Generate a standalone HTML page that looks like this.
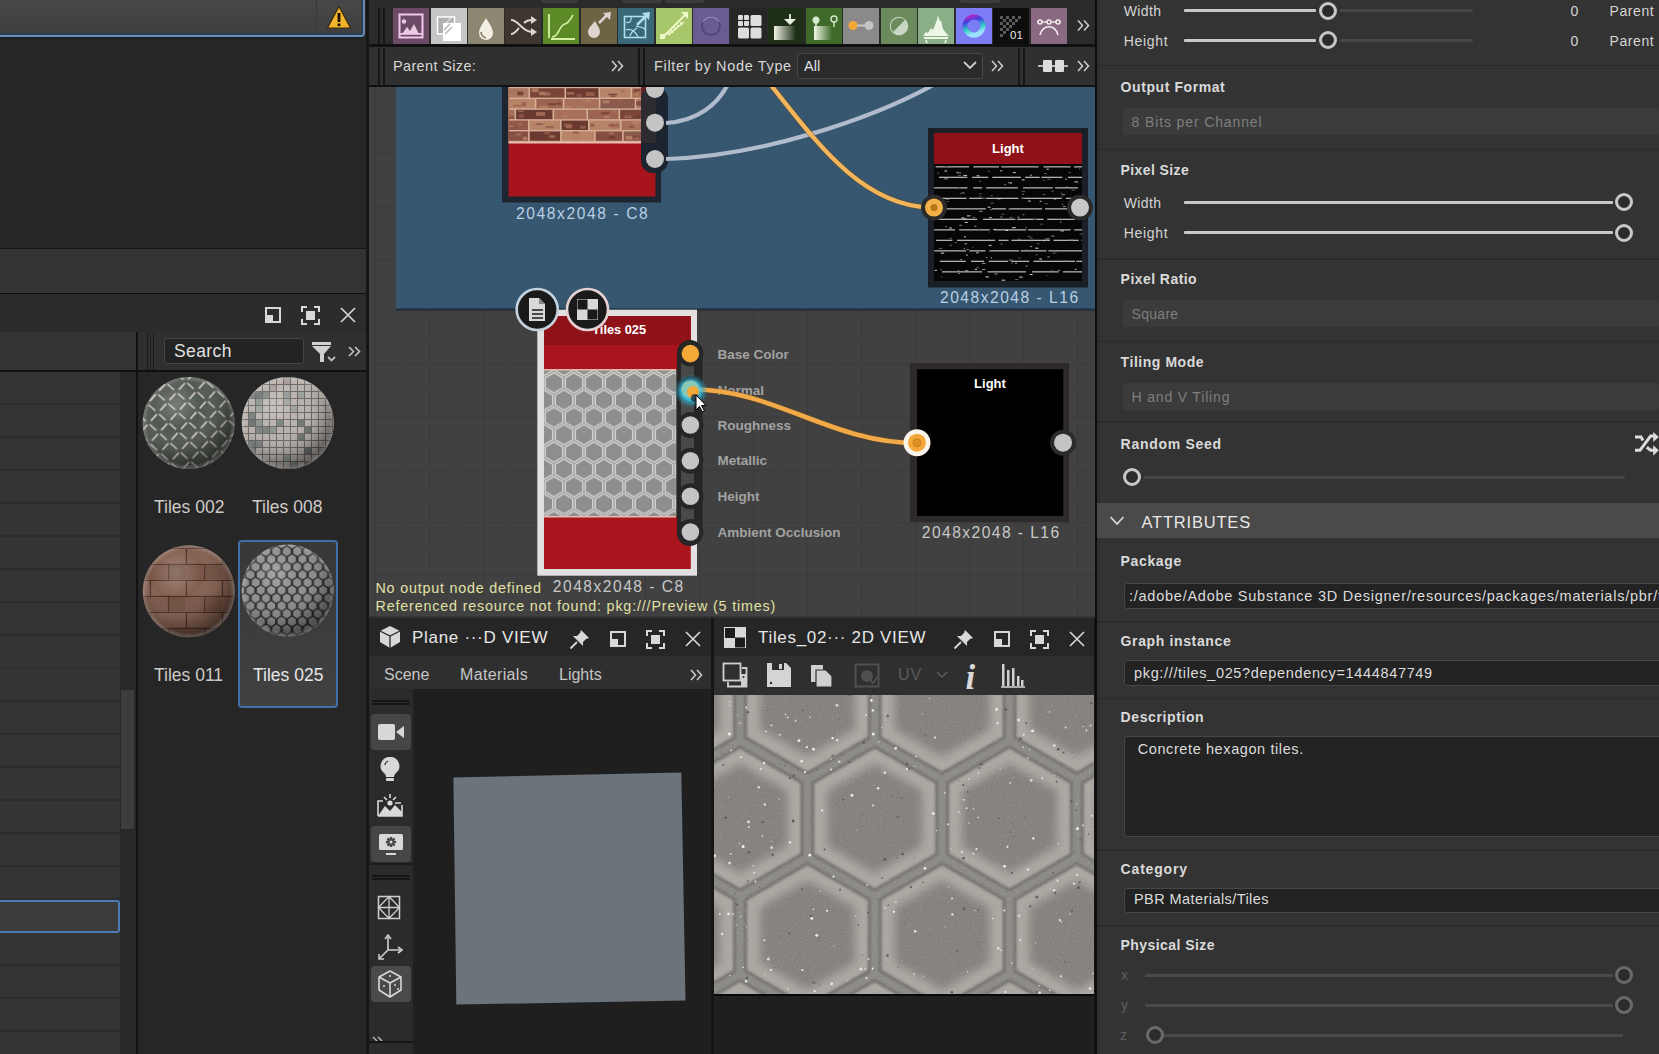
<!DOCTYPE html>
<html><head><meta charset="utf-8">
<style>
*{box-sizing:border-box;margin:0;padding:0}
html,body{width:1659px;height:1054px;overflow:hidden;background:#333;font-family:"Liberation Sans",sans-serif;color:#ccc}
.a{position:absolute}
.t{position:absolute;white-space:nowrap;line-height:1}
svg{position:absolute;overflow:visible}
</style></head><body>


<!-- ============ LEFT PANEL ============ -->
<div class="a" style="left:0;top:0;width:366px;height:1054px;background:#262626"></div>
<div class="a" style="left:0;top:0;width:365px;height:36.5px;background:linear-gradient(#474747,#3f3f3f);border-bottom:2px solid #6f8cb6;border-right:2px solid #6a88ac;border-bottom-right-radius:4px;box-shadow:inset 0 -1.5px 0 #22405e, inset -1.5px 0 0 #22405e, 0 1.5px 0 #16202c"></div>
<div class="a" style="left:316px;top:0;width:1px;height:35px;background:#393939"></div>
<svg style="left:326px;top:5px" width="26" height="25" viewBox="0 0 26 25"><path d="M13 1.5 L24.5 23 L1.5 23 Z" fill="#f2b52a" stroke="#3a2a10" stroke-width="1.2" stroke-linejoin="round"/><rect x="11.6" y="8" width="2.8" height="9" fill="#1a0a05"/><rect x="11.6" y="18.5" width="2.8" height="2.6" fill="#1a0a05"/></svg>
<div class="a" style="left:0;top:248px;width:366px;height:46px;background:#333;border-top:1px solid #141414;border-bottom:1px solid #0e0e0e"></div>
<div class="a" style="left:0;top:294px;width:366px;height:38px;background:#2c2c2c"></div>
<!-- panel header icons -->
<svg style="left:265px;top:307px" width="16" height="16" viewBox="0 0 16 16"><rect x="1" y="1" width="14" height="14" fill="none" stroke="#d8d8d8" stroke-width="2"/><rect x="1" y="8" width="7" height="7" fill="#d8d8d8"/></svg>
<svg style="left:301px;top:306px" width="19" height="19" viewBox="0 0 19 19"><path d="M1 6V1H6M13 1H18V6M18 13V18H13M6 18H1V13" fill="none" stroke="#d8d8d8" stroke-width="2"/><rect x="5" y="5" width="9" height="9" fill="#d8d8d8"/></svg>
<svg style="left:340px;top:307px" width="16" height="16" viewBox="0 0 16 16"><path d="M1 1L15 15M15 1L1 15" stroke="#d8d8d8" stroke-width="1.6"/></svg>
<div class="a" style="left:0;top:332px;width:136px;height:39px;background:#333"></div>
<div class="a" style="left:138px;top:332px;width:228px;height:39px;background:#2f2f2f"></div>
<div class="a" style="left:147px;top:333px;width:1px;height:37px;background:#181818"></div>
<div class="a" style="left:150px;top:333px;width:1px;height:37px;background:#222"></div>
<div class="a" style="left:153px;top:333px;width:1px;height:37px;background:#181818"></div>
<div class="a" style="left:164px;top:338px;width:140px;height:26px;background:#232323;border:1px solid #454545;border-radius:3px"></div>
<div class="t" style="left:174px;top:343px;font-size:17.5px;color:#e0e0e0;letter-spacing:0.4px">Search</div>
<svg style="left:312px;top:342px" width="26" height="22" viewBox="0 0 26 22"><rect x="0" y="0" width="19" height="3" fill="#d0d0d0"/><path d="M0 4H19L12 12V20H8V12Z" fill="#d0d0d0"/><path d="M16 15L19.5 18.5L23 15" fill="none" stroke="#bbb" stroke-width="1.8"/></svg>
<svg style="left:348px;top:346px" width="13" height="11" viewBox="0 0 13 11"><path d="M1 1L5.5 5.5L1 10M7 1L11.5 5.5L7 10" fill="none" stroke="#c8c8c8" stroke-width="1.5"/></svg>
<div class="a" style="left:0;top:370px;width:366px;height:2px;background:#0f0f0f"></div>
<div class="a" style="left:136px;top:332px;width:2px;height:722px;background:#121212"></div>
<!-- list rows -->
<div class="a" style="left:0;top:371.5px;width:120px;height:683px;background:repeating-linear-gradient(#343434 0px,#343434 31.5px,#2c2c2c 31.5px,#2c2c2c 33px)"></div>
<div class="a" style="left:120px;top:372px;width:16px;height:682px;background:#282828"></div>
<div class="a" style="left:121px;top:690px;width:13px;height:139px;background:#3d3d3d"></div>
<div class="a" style="left:0;top:900px;width:120px;height:33px;background:#3c3c3c;border:2px solid #4c7bb3;border-left:none;border-radius:0 3px 3px 0"></div>
<!-- thumbnails -->
<div class="a" style="left:138px;top:372px;width:227px;height:682px;background:#262626"></div>
<div class="a" style="left:238px;top:540px;width:100px;height:168px;background:linear-gradient(#383838,#414141);border:2px solid #3f70a8;border-radius:4px"></div>
<svg style="left:0;top:0" width="366" height="720" viewBox="0 0 366 720">
<defs>
<radialGradient id="shd" cx="0.36" cy="0.3" r="0.78"><stop offset="0" stop-color="#fff" stop-opacity="0.22"/><stop offset="0.35" stop-color="#fff" stop-opacity="0"/><stop offset="0.7" stop-color="#000" stop-opacity="0.18"/><stop offset="0.92" stop-color="#000" stop-opacity="0.5"/><stop offset="1" stop-color="#000" stop-opacity="0.6"/></radialGradient>
<radialGradient id="rim" cx="0.5" cy="0.5" r="0.5"><stop offset="0.9" stop-color="#fff" stop-opacity="0"/><stop offset="1" stop-color="#ddd" stop-opacity="0.25"/></radialGradient>
<pattern id="p002" width="14" height="14" patternUnits="userSpaceOnUse" patternTransform="translate(188 420) rotate(42)"><rect width="14" height="14" fill="#525852"/><path d="M2.5 1H11.5M1 2.5V11.5" stroke="#cfc8c0" stroke-width="1.7"/></pattern>
<pattern id="p008" width="7" height="7" patternUnits="userSpaceOnUse" patternTransform="translate(241 377)"><path d="M0 0.5H7M0.5 0V7" stroke="#6a6866" stroke-width="1"/></pattern>
<pattern id="p011" width="36" height="32" patternUnits="userSpaceOnUse" patternTransform="translate(150 548)"><rect width="36" height="32" fill="#7a5648"/><rect x="1" y="1" width="34" height="14" fill="#84604f"/><rect x="19" y="17" width="16" height="14" fill="#70503f"/><path d="M0 0.5H36M0 16.5H36M0.5 0V16M18.5 16V32" stroke="#4a3028" stroke-width="1.2"/></pattern>
<pattern id="p025" width="10.4" height="15.6" patternUnits="userSpaceOnUse" patternTransform="translate(240 545)"><rect width="10.4" height="15.6" fill="#2e2e2c"/><path d="M5.20 10.90L1.26 8.62L1.26 4.07L5.20 1.80L9.14 4.07L9.14 8.62ZM0.00 18.70L-3.94 16.43L-3.94 11.88L-0.00 9.60L3.94 11.87L3.94 16.43ZM10.40 18.70L6.46 16.43L6.46 11.88L10.40 9.60L14.34 11.87L14.34 16.43ZM0.00 3.10L-3.94 0.82L-3.94 -3.73L-0.00 -6.00L3.94 -3.73L3.94 0.82ZM10.40 3.10L6.46 0.82L6.46 -3.73L10.40 -6.00L14.34 -3.73L14.34 0.82Z" fill="#8e8e8c"/></pattern>
<clipPath id="c008"><circle cx="287.8" cy="423" r="46"/></clipPath>
</defs>
<circle cx="188.7" cy="423" r="46" fill="url(#p002)"/><circle cx="188.7" cy="423" r="46" fill="url(#shd)"/><circle cx="188.7" cy="423" r="46" fill="url(#rim)"/>
<circle cx="287.8" cy="423" r="46" fill="#bab2ac"/><g clip-path="url(#c008)"><rect x="248" y="391" width="7" height="7" fill="#6e7672"/><rect x="248" y="412" width="7" height="7" fill="#7c8480"/><rect x="248" y="419" width="7" height="7" fill="#6e7672"/><rect x="248" y="440" width="7" height="7" fill="#7c8480"/><rect x="248" y="447" width="7" height="7" fill="#7c8480"/><rect x="255" y="391" width="7" height="7" fill="#6e7672"/><rect x="255" y="398" width="7" height="7" fill="#8e9692"/><rect x="255" y="405" width="7" height="7" fill="#9aa09c"/><rect x="255" y="419" width="7" height="7" fill="#8e9692"/><rect x="255" y="426" width="7" height="7" fill="#7c8480"/><rect x="255" y="440" width="7" height="7" fill="#7c8480"/><rect x="262" y="391" width="7" height="7" fill="#7c8480"/><rect x="262" y="426" width="7" height="7" fill="#7c8480"/><rect x="269" y="384" width="7" height="7" fill="#a89c96"/><rect x="269" y="426" width="7" height="7" fill="#8e9692"/><rect x="276" y="419" width="7" height="7" fill="#7c8480"/><rect x="283" y="377" width="7" height="7" fill="#a89c96"/><rect x="283" y="391" width="7" height="7" fill="#8e9692"/><rect x="283" y="398" width="7" height="7" fill="#9aa09c"/><rect x="283" y="454" width="7" height="7" fill="#8e9692"/><rect x="290" y="405" width="7" height="7" fill="#9aa09c"/><rect x="290" y="461" width="7" height="7" fill="#8e9692"/><rect x="297" y="391" width="7" height="7" fill="#9aa09c"/><rect x="297" y="419" width="7" height="7" fill="#6e7672"/><rect x="297" y="433" width="7" height="7" fill="#6e7672"/><rect x="304" y="426" width="7" height="7" fill="#6e7672"/><rect x="304" y="447" width="7" height="7" fill="#6e7672"/><rect x="304" y="461" width="7" height="7" fill="#6e7672"/><rect x="318" y="447" width="7" height="7" fill="#9aa09c"/></g><circle cx="287.8" cy="423" r="46" fill="url(#p008)"/><circle cx="287.8" cy="423" r="46" fill="url(#shd)"/><circle cx="287.8" cy="423" r="46" fill="url(#rim)"/>
<circle cx="188.8" cy="591.3" r="46" fill="url(#p011)"/><circle cx="188.8" cy="591.3" r="46" fill="url(#shd)"/><circle cx="188.8" cy="591.3" r="46" fill="url(#rim)"/>
<circle cx="287.7" cy="590.4" r="46" fill="url(#p025)"/><circle cx="287.7" cy="590.4" r="46" fill="url(#shd)"/><circle cx="287.7" cy="590.4" r="46" fill="url(#rim)"/>
</svg>
<div class="t" style="left:154px;top:499px;font-size:17.5px;color:#cfcac6">Tiles 002</div>
<div class="t" style="left:252px;top:499px;font-size:17.5px;color:#cfcac6">Tiles 008</div>
<div class="t" style="left:154px;top:667px;font-size:17.5px;color:#cfcac6">Tiles 011</div>
<div class="t" style="left:253px;top:667px;font-size:17.5px;color:#e6e6e6">Tiles 025</div>


<!-- ============ MIDDLE ============ -->
<div class="a" style="left:366px;top:0;width:3px;height:1054px;background:#161616"></div>
<div class="a" style="left:369px;top:0;width:727px;height:45px;background:#2b2b2b"></div>
<div class="a" style="left:541px;top:0;width:37px;height:3px;background:#3c3c3c;border-radius:0 0 3px 3px"></div>
<div class="a" style="left:622px;top:0;width:40px;height:3px;background:#3c3c3c;border-radius:0 0 3px 3px"></div>
<div class="a" style="left:665px;top:0;width:40px;height:3px;background:#3c3c3c;border-radius:0 0 3px 3px"></div>
<div class="a" style="left:960px;top:0;width:40px;height:3px;background:#3c3c3c;border-radius:0 0 3px 3px"></div>
<div class="a" style="left:378px;top:8px;width:2px;height:37px;background:#161616"></div>
<div class="a" style="left:383px;top:8px;width:2px;height:37px;background:#161616"></div>
<svg style="left:393px;top:8px" width="36" height="36" viewBox="0 0 36 36"><rect width="36" height="36" fill="#6a4a64"/><rect x="6.5" y="6.5" width="23" height="23" fill="none" stroke="#f2c8ee" stroke-width="2"/><circle cx="11" cy="13.5" r="2.2" fill="#e8c8e4"/><path d="M9 26L14 19L17 23L21 16L26 26Z" fill="#e8cce4"/><rect x="7" y="25" width="22" height="1.8" fill="#f2c8ee"/></svg>
<svg style="left:431px;top:8px" width="36" height="36" viewBox="0 0 36 36"><rect width="36" height="36" fill="#c6c6c6"/><rect x="6.5" y="9" width="17" height="17" fill="#b0b0b0" stroke="#fff" stroke-width="1.5"/><path d="M14 16L20 10M14 21L21 14" stroke="#ddd" stroke-width="1.5"/><rect x="12" y="15" width="18" height="18" fill="#fff"/><path d="M13 22L19 16M14 26L21 19" stroke="#b8b8b8" stroke-width="1.6"/></svg>
<svg style="left:468px;top:8px" width="36" height="36" viewBox="0 0 36 36"><rect width="36" height="36" fill="#8c8770"/><path d="M18 10C21 15 25 20 25 25A7 7 0 0 1 11 25C11 20 15 15 18 10Z" fill="#f2eee2"/><path d="M13 24C13 28 15 29 18 30" fill="none" stroke="#7a7560" stroke-width="1.5"/></svg>
<svg style="left:505px;top:8px" width="36" height="36" viewBox="0 0 36 36"><rect width="36" height="36" fill="#3c3530"/><path d="M6 12C14 12 17 24 27 24M6 26C10 26 12 22 14 20M19 15C21 13 23 12 27 12" fill="none" stroke="#ddd5cc" stroke-width="2"/><path d="M26 8L32 12L26 16Z M26 20L32 24L26 28Z" fill="#ddd5cc"/></svg>
<svg style="left:543px;top:8px" width="36" height="36" viewBox="0 0 36 36"><rect width="36" height="36" fill="#5c8a26"/><path d="M6 6V30M8 31H32" stroke="#d6f0a8" stroke-width="1.8"/><path d="M9 29C16 29 16 17 22 16C26 15 28 10 30 7" fill="none" stroke="#d6f0a8" stroke-width="1.6"/></svg>
<svg style="left:581px;top:8px" width="36" height="36" viewBox="0 0 36 36"><rect width="36" height="36" fill="#6c6445"/><path d="M14 13C16 17 19 20 19 24A6 6 0 0 1 7 24C7 20 11 17 14 13Z" fill="#ddd4d0"/><path d="M18 15L27 6" stroke="#ddd4d0" stroke-width="2.5"/><path d="M22 5L30 4L29 12Z" fill="#ddd4d0"/></svg>
<svg style="left:618px;top:8px" width="36" height="36" viewBox="0 0 36 36"><rect width="36" height="36" fill="#3a6878"/><rect x="6.5" y="8.5" width="21" height="21" fill="none" stroke="#aee0f0" stroke-width="1.6"/><path d="M8 14C12 16 14 12 13 9M8 22C13 20 18 24 20 29M18 18C22 20 26 18 27 22M12 28C13 24 16 22 19 20" fill="none" stroke="#aee0f0" stroke-width="1.2"/><path d="M19 17L29 7" stroke="#aee0f0" stroke-width="2.5"/><path d="M24 5L32 4L31 12Z" fill="#aee0f0"/></svg>
<svg style="left:656px;top:8px" width="36" height="36" viewBox="0 0 36 36"><rect width="36" height="36" fill="#a8c66a"/><path d="M6 30L30 6" stroke="#eef8c8" stroke-width="1.8"/><rect x="4" y="26" width="5" height="5" fill="#eef8c8"/><path d="M25 4L32 4L32 11Z" fill="#eef8c8"/><path d="M12 27L28 14M14 27L12 24M17 25L15 22M20 22L18 19M23 19L21 17M26 17L24 14" stroke="#eef8c8" stroke-width="1.6"/></svg>
<svg style="left:693px;top:8px" width="36" height="36" viewBox="0 0 36 36"><rect width="36" height="36" fill="#6a5c90"/><circle cx="18" cy="18" r="9" fill="none" stroke="#52457a" stroke-width="1.8"/><path d="M10 14A9 9 0 0 1 26 14" fill="none" stroke="#9a8cc8" stroke-width="1.2"/></svg>
<svg style="left:731px;top:8px" width="36" height="36" viewBox="0 0 36 36"><rect width="36" height="36" fill="#262626"/><rect x="7" y="7" width="5" height="5" rx="1" fill="#ddd"/><rect x="13" y="7" width="5" height="5" rx="1" fill="#ddd"/><rect x="7" y="13" width="5" height="5" rx="1" fill="#ddd"/><rect x="13" y="13" width="5" height="5" rx="1" fill="#ddd"/><rect x="19.5" y="7" width="11" height="11" rx="1.5" fill="#ddd"/><rect x="7" y="19.5" width="11" height="11" rx="1.5" fill="#ddd"/><rect x="19.5" y="19.5" width="11" height="11" rx="1.5" fill="#ddd"/></svg>
<svg style="left:768px;top:8px" width="36" height="36" viewBox="0 0 36 36"><rect width="36" height="36" fill="#1f2e17"/><defs><linearGradient id="gr11" x1="0" x2="1"><stop offset="0" stop-color="#f0f4e8"/><stop offset="1" stop-color="#1f2e17"/></linearGradient></defs><rect x="6" y="18" width="22" height="14" fill="url(#gr11)"/><path d="M22 6V14" stroke="#e8eee0" stroke-width="1.8"/><path d="M16 11H28L22 17Z" fill="#e8eee0"/></svg>
<svg style="left:806px;top:8px" width="36" height="36" viewBox="0 0 36 36"><rect width="36" height="36" fill="#3f6a2a"/><defs><linearGradient id="gr12" x1="0" x2="1"><stop offset="0" stop-color="#f0f8e8"/><stop offset="1" stop-color="#3f6a2a"/></linearGradient></defs><path d="M8 18H26V32H8Z" fill="url(#gr12)"/><circle cx="10" cy="12" r="3.5" fill="#d8e8d0"/><path d="M8 14L10 19L12 14" fill="#d8e8d0"/><circle cx="28" cy="11" r="3" fill="none" stroke="#d8e8d0" stroke-width="1.4"/><path d="M28 14V19" stroke="#d8e8d0" stroke-width="1.4"/></svg>
<svg style="left:843px;top:8px" width="36" height="36" viewBox="0 0 36 36"><rect width="36" height="36" fill="#8a8a8a"/><circle cx="10" cy="17.5" r="4.5" fill="#f4a838"/><circle cx="26" cy="17.5" r="4.5" fill="#c4c4c4"/><rect x="14" y="16.5" width="8" height="2" fill="#c8c8c8"/></svg>
<svg style="left:881px;top:8px" width="36" height="36" viewBox="0 0 36 36"><rect width="36" height="36" fill="#6b8b5c"/><circle cx="18" cy="18" r="8.5" fill="#c8d8c4" stroke="#c8d8c4" stroke-width="1.5"/><path d="M12 24L24 12A8.5 8.5 0 0 0 12 24Z" fill="#6b8b5c"/></svg>
<svg style="left:918px;top:8px" width="36" height="36" viewBox="0 0 36 36"><rect width="36" height="36" fill="#8aae88"/><path d="M5 28L8 24L10 25L13 20L15 22L17 17L19 12L20 7L22 14L23 12L25 21L28 25L31 28Z" fill="#eef6e6"/><rect x="6" y="29" width="24" height="2" fill="#eef6e6"/><path d="M8 32L9 35M28 32L27 35" stroke="#eef6e6" stroke-width="1.5"/></svg>
<svg style="left:956px;top:8px" width="36" height="36" viewBox="0 0 36 36"><rect width="36" height="36" fill="#7c7cf4"/><defs><linearGradient id="gr16" x1="0" y1="0" x2="0.3" y2="1"><stop offset="0" stop-color="#c020c0"/><stop offset="0.3" stop-color="#4040e0"/><stop offset="0.7" stop-color="#30d0c0"/><stop offset="1" stop-color="#a0e0ff"/></linearGradient></defs><circle cx="18" cy="18" r="9" fill="none" stroke="url(#gr16)" stroke-width="5"/></svg>
<svg style="left:993px;top:8px" width="36" height="36" viewBox="0 0 36 36"><rect width="36" height="36" fill="#0d0d0d"/><path d="M7 8h3v3h-3zM13 8h3v3h-3zM19 8h3v3h-3zM25 8h3v3h-3zM10 11h3v3h-3zM16 11h3v3h-3zM22 11h3v3h-3zM7 14h3v3h-3zM13 14h3v3h-3zM19 14h3v3h-3zM10 17h3v3h-3zM16 17h3v3h-3zM7 20h3v3h-3zM13 20h3v3h-3zM10 23h3v3h-3zM7 26h3v3h-3z" fill="#5a5a5a"/><text x="17" y="31" font-family="Liberation Sans" font-size="11.5" fill="#e8e8e8">01</text></svg>
<svg style="left:1031px;top:8px" width="36" height="36" viewBox="0 0 36 36"><rect width="36" height="36" fill="#8a6a82"/><path d="M9 27C12 16 24 16 27 27" fill="none" stroke="#f4eef0" stroke-width="1.6"/><path d="M6 14H30" stroke="#f4eef0" stroke-width="1.4"/><circle cx="9" cy="14" r="2" fill="#8a6a82" stroke="#f4eef0" stroke-width="1.4"/><circle cx="18" cy="14" r="2" fill="#8a6a82" stroke="#f4eef0" stroke-width="1.4"/><circle cx="27" cy="14" r="2" fill="#8a6a82" stroke="#f4eef0" stroke-width="1.4"/></svg>
<svg style="left:1077px;top:19px" width="13" height="13" viewBox="0 0 13 13"><path d="M1 1.5L5.5 6.5L1 11.5M7 1.5L11.5 6.5L7 11.5" fill="none" stroke="#cfcfcf" stroke-width="1.5"/></svg>
<div class="a" style="left:369px;top:44px;width:727px;height:3px;background:#111"></div>
<div class="a" style="left:369px;top:47px;width:727px;height:38px;background:#303030"></div>
<div class="a" style="left:378px;top:48px;width:2px;height:37px;background:#161616"></div>
<div class="a" style="left:383px;top:48px;width:2px;height:37px;background:#161616"></div>
<div class="t" style="left:393px;top:59px;font-size:14.5px;color:#d6d6d6;letter-spacing:0.35px">Parent Size:</div>
<svg style="left:611px;top:60px" width="13" height="12" viewBox="0 0 13 12"><path d="M1 1L5.5 6L1 11M7 1L11.5 6L7 11" fill="none" stroke="#cfcfcf" stroke-width="1.5"/></svg>
<div class="a" style="left:638px;top:48px;width:2px;height:37px;background:#161616"></div>
<div class="a" style="left:643px;top:48px;width:2px;height:37px;background:#161616"></div>
<div class="t" style="left:654px;top:59px;font-size:14.5px;color:#d6d6d6;letter-spacing:0.65px">Filter by Node Type</div>
<div class="a" style="left:797px;top:53px;width:186px;height:26px;background:#2a2a2a;border:1px solid #474747;border-radius:3px"></div>
<div class="t" style="left:804px;top:59px;font-size:14.5px;color:#e0e0e0">All</div>
<svg style="left:963px;top:61px" width="14" height="9" viewBox="0 0 14 9"><path d="M1 1L7 7L13 1" fill="none" stroke="#cfcfcf" stroke-width="1.8"/></svg>
<svg style="left:991px;top:60px" width="13" height="12" viewBox="0 0 13 12"><path d="M1 1L5.5 6L1 11M7 1L11.5 6L7 11" fill="none" stroke="#cfcfcf" stroke-width="1.5"/></svg>
<div class="a" style="left:1018px;top:48px;width:2px;height:37px;background:#161616"></div>
<div class="a" style="left:1023px;top:48px;width:2px;height:37px;background:#161616"></div>
<svg style="left:1038px;top:58px" width="30" height="16" viewBox="0 0 30 16"><path d="M0 8H30" stroke="#ddd" stroke-width="1.6"/><rect x="5" y="2" width="9" height="12" rx="1" fill="#ddd"/><rect x="17" y="2" width="9" height="12" rx="1" fill="#ddd"/></svg>
<svg style="left:1077px;top:60px" width="13" height="12" viewBox="0 0 13 12"><path d="M1 1L5.5 6L1 11M7 1L11.5 6L7 11" fill="none" stroke="#cfcfcf" stroke-width="1.5"/></svg>
<div class="a" style="left:369px;top:85px;width:727px;height:2px;background:#111"></div>

<svg style="left:369px;top:87px;overflow:hidden" width="727" height="529" viewBox="369 87 727 529">
<defs>
<pattern id="gridc" width="54" height="52.7" patternUnits="userSpaceOnUse" patternTransform="translate(429 364)"><rect width="54" height="52.7" fill="#414141"/><path d="M0 0.5H54M0.5 0V52.7" stroke="#3b3b3b" stroke-width="1.5"/><path d="M0 26.5H54M27 0V52.7" stroke="#3f3f3f" stroke-width="1"/></pattern>
<pattern id="gridb" width="54" height="52.7" patternUnits="userSpaceOnUse" patternTransform="translate(429 364)"><rect width="54" height="52.7" fill="#37566f"/><path d="M0 0.5H54M0.5 0V52.7" stroke="#34526b" stroke-width="1.2"/></pattern>
<pattern id="hexs" width="20" height="34.6" patternUnits="userSpaceOnUse" patternTransform="translate(544 372)"><rect width="20" height="34.6" fill="#a6a6a4"/>
<g fill="#8e8e8c" stroke="#cfcfcd" stroke-width="1.3">
<path d="M10 0.8L18.6 5.8V15.8L10 20.8L1.4 15.8V5.8Z"/>
<path d="M10 35.4L18.6 40.4V50.4L10 55.4L1.4 50.4V40.4Z"/>
<path d="M0 18.1L8.6 23.1V33.1L0 38.1L-8.6 33.1V23.1Z"/><path d="M20 18.1L28.6 23.1V33.1L20 38.1L11.4 33.1V23.1Z"/>
<path d="M0 -16.5L8.6 -11.5V-1.5L0 3.5L-8.6 -1.5V-11.5Z"/><path d="M20 -16.5L28.6 -11.5V-1.5L20 3.5L11.4 -1.5V-11.5Z"/>
</g></pattern>
</defs>
<rect x="369" y="87" width="727" height="529" fill="url(#gridc)"/>
<rect x="396" y="87" width="699" height="222" fill="url(#gridb)"/>
<rect x="396" y="308.5" width="699" height="2" fill="#1e2c3a"/>

<!-- top brick node -->
<rect x="502" y="87" width="159" height="115.5" fill="#1d2530"/>
<rect x="508.5" y="87" width="147" height="109.5" fill="#a8141c"/>
<rect x="508.5" y="87" width="132.5" height="56" fill="#d4ae96"/><rect x="508.5" y="88.2" width="20.0" height="9.4" fill="#ac7862"/><rect x="511.2" y="92.9" width="5.7" height="3.6" fill="#ac7862" opacity="0.8"/><rect x="509.7" y="90.0" width="6.8" height="3.5" fill="#a8705a" opacity="0.8"/><rect x="517.2" y="91.6" width="6.2" height="3.7" fill="#6a3a30" opacity="0.8"/><rect x="530.1" y="88.2" width="34.4" height="9.4" fill="#7a4438"/><rect x="531.8" y="88.4" width="6.7" height="3.6" fill="#b88468" opacity="0.8"/><rect x="539.1" y="91.8" width="6.6" height="3.4" fill="#b88468" opacity="0.8"/><rect x="544.2" y="92.4" width="6.1" height="3.1" fill="#ac7862" opacity="0.8"/><rect x="566.1" y="88.2" width="32.4" height="9.4" fill="#6a3a30"/><rect x="585.7" y="92.1" width="9.0" height="4.0" fill="#9c6450" opacity="0.8"/><rect x="566.8" y="92.0" width="7.5" height="2.8" fill="#a8705a" opacity="0.8"/><rect x="576.5" y="93.8" width="5.4" height="3.6" fill="#94584a" opacity="0.8"/><rect x="600.1" y="88.2" width="30.4" height="9.4" fill="#b88468"/><rect x="608.3" y="93.7" width="8.6" height="1.6" fill="#6a3a30" opacity="0.8"/><rect x="621.1" y="89.9" width="3.4" height="3.1" fill="#a8705a" opacity="0.8"/><rect x="610.5" y="95.5" width="4.9" height="1.5" fill="#7a4438" opacity="0.8"/><rect x="632.1" y="88.2" width="8.9" height="9.4" fill="#a8705a"/><rect x="634.9" y="92.8" width="3.1" height="2.7" fill="#b88468" opacity="0.8"/><rect x="634.4" y="89.2" width="5.7" height="2.0" fill="#6a3a30" opacity="0.8"/><rect x="633.2" y="90.1" width="3.7" height="2.6" fill="#864e42" opacity="0.8"/><rect x="508.5" y="99.0" width="26.3" height="9.4" fill="#b88468"/><rect x="521.9" y="102.2" width="4.1" height="4.0" fill="#94584a" opacity="0.8"/><rect x="513.0" y="104.7" width="8.9" height="2.0" fill="#9c6450" opacity="0.8"/><rect x="509.9" y="100.5" width="8.0" height="2.5" fill="#b88468" opacity="0.8"/><rect x="536.4" y="99.0" width="26.4" height="9.4" fill="#9c6450"/><rect x="556.7" y="102.3" width="5.2" height="2.6" fill="#7a4438" opacity="0.8"/><rect x="539.2" y="105.8" width="8.2" height="2.0" fill="#b88468" opacity="0.8"/><rect x="548.4" y="103.2" width="7.4" height="1.9" fill="#6a3a30" opacity="0.8"/><rect x="564.4" y="99.0" width="34.4" height="9.4" fill="#a8705a"/><rect x="565.6" y="106.4" width="5.5" height="1.8" fill="#b88468" opacity="0.8"/><rect x="575.8" y="105.3" width="7.4" height="2.5" fill="#ac7862" opacity="0.8"/><rect x="585.8" y="99.6" width="4.8" height="1.9" fill="#b88468" opacity="0.8"/><rect x="600.4" y="99.0" width="34.4" height="9.4" fill="#8a5a4c"/><rect x="602.5" y="100.4" width="6.9" height="3.0" fill="#b88468" opacity="0.8"/><rect x="611.5" y="101.0" width="7.5" height="1.7" fill="#94584a" opacity="0.8"/><rect x="617.8" y="100.0" width="4.1" height="2.4" fill="#9c6450" opacity="0.8"/><rect x="636.4" y="99.0" width="4.6" height="9.4" fill="#ac7862"/><rect x="636.4" y="102.7" width="4.6" height="3.1" fill="#7a4438" opacity="0.8"/><rect x="636.4" y="101.0" width="4.6" height="3.8" fill="#864e42" opacity="0.8"/><rect x="636.4" y="102.8" width="4.6" height="1.6" fill="#864e42" opacity="0.8"/><rect x="508.5" y="109.8" width="6.0" height="9.4" fill="#a8705a"/><rect x="508.5" y="116.4" width="5.7" height="2.4" fill="#7a4438" opacity="0.8"/><rect x="508.5" y="113.7" width="6.0" height="3.8" fill="#a8705a" opacity="0.8"/><rect x="508.5" y="115.8" width="6.0" height="2.5" fill="#94584a" opacity="0.8"/><rect x="516.1" y="109.8" width="36.4" height="9.4" fill="#6a3a30"/><rect x="518.3" y="110.6" width="5.3" height="1.5" fill="#a8705a" opacity="0.8"/><rect x="536.0" y="112.1" width="9.0" height="3.7" fill="#ac7862" opacity="0.8"/><rect x="518.6" y="114.2" width="5.6" height="3.6" fill="#94584a" opacity="0.8"/><rect x="554.1" y="109.8" width="32.4" height="9.4" fill="#a8705a"/><rect x="572.6" y="113.5" width="5.9" height="2.1" fill="#ac7862" opacity="0.8"/><rect x="562.5" y="115.2" width="4.5" height="1.5" fill="#b88468" opacity="0.8"/><rect x="563.1" y="115.4" width="6.1" height="3.4" fill="#ac7862" opacity="0.8"/><rect x="588.1" y="109.8" width="30.4" height="9.4" fill="#9c6450"/><rect x="603.9" y="115.7" width="5.4" height="2.1" fill="#b88468" opacity="0.8"/><rect x="601.0" y="112.0" width="8.3" height="2.5" fill="#7a4438" opacity="0.8"/><rect x="611.9" y="110.1" width="3.8" height="2.4" fill="#a8705a" opacity="0.8"/><rect x="620.1" y="109.8" width="20.9" height="9.4" fill="#7a4438"/><rect x="636.0" y="115.4" width="3.7" height="2.7" fill="#6a3a30" opacity="0.8"/><rect x="624.5" y="115.4" width="6.8" height="2.7" fill="#ac7862" opacity="0.8"/><rect x="624.5" y="113.4" width="4.9" height="3.6" fill="#864e42" opacity="0.8"/><rect x="508.5" y="120.6" width="19.5" height="9.4" fill="#94584a"/><rect x="510.9" y="125.9" width="6.8" height="2.5" fill="#864e42" opacity="0.8"/><rect x="509.2" y="125.4" width="4.4" height="1.9" fill="#ac7862" opacity="0.8"/><rect x="518.7" y="123.1" width="3.7" height="2.8" fill="#a8705a" opacity="0.8"/><rect x="529.6" y="120.6" width="30.4" height="9.4" fill="#b88468"/><rect x="545.7" y="126.1" width="7.9" height="2.1" fill="#8a5a4c" opacity="0.8"/><rect x="535.9" y="123.2" width="7.3" height="1.9" fill="#8a5a4c" opacity="0.8"/><rect x="533.5" y="125.2" width="6.0" height="4.0" fill="#b88468" opacity="0.8"/><rect x="561.6" y="120.6" width="26.4" height="9.4" fill="#6a3a30"/><rect x="563.9" y="123.4" width="8.6" height="3.3" fill="#94584a" opacity="0.8"/><rect x="580.2" y="125.8" width="5.3" height="2.9" fill="#9c6450" opacity="0.8"/><rect x="565.8" y="125.2" width="5.8" height="3.1" fill="#a8705a" opacity="0.8"/><rect x="589.6" y="120.6" width="30.4" height="9.4" fill="#b88468"/><rect x="611.1" y="123.6" width="8.4" height="4.0" fill="#9c6450" opacity="0.8"/><rect x="590.0" y="123.7" width="4.6" height="3.3" fill="#94584a" opacity="0.8"/><rect x="608.6" y="123.8" width="5.6" height="2.9" fill="#94584a" opacity="0.8"/><rect x="621.6" y="120.6" width="19.4" height="9.4" fill="#a8705a"/><rect x="629.0" y="126.0" width="5.6" height="1.6" fill="#7a4438" opacity="0.8"/><rect x="633.8" y="123.4" width="5.8" height="4.0" fill="#ac7862" opacity="0.8"/><rect x="631.8" y="121.2" width="8.7" height="2.7" fill="#b88468" opacity="0.8"/><rect x="508.5" y="131.4" width="19.6" height="9.4" fill="#864e42"/><rect x="510.4" y="134.8" width="8.0" height="2.9" fill="#8a5a4c" opacity="0.8"/><rect x="522.9" y="136.9" width="4.5" height="3.2" fill="#b88468" opacity="0.8"/><rect x="516.5" y="133.5" width="4.8" height="1.9" fill="#ac7862" opacity="0.8"/><rect x="529.7" y="131.4" width="30.4" height="9.4" fill="#6a3a30"/><rect x="544.3" y="131.6" width="6.2" height="2.8" fill="#94584a" opacity="0.8"/><rect x="549.2" y="135.3" width="6.1" height="2.5" fill="#ac7862" opacity="0.8"/><rect x="554.7" y="134.9" width="3.6" height="1.9" fill="#6a3a30" opacity="0.8"/><rect x="561.7" y="131.4" width="32.4" height="9.4" fill="#b88468"/><rect x="573.2" y="137.6" width="5.8" height="1.8" fill="#ac7862" opacity="0.8"/><rect x="572.7" y="131.7" width="6.1" height="1.8" fill="#864e42" opacity="0.8"/><rect x="562.3" y="132.6" width="3.8" height="3.4" fill="#b88468" opacity="0.8"/><rect x="595.7" y="131.4" width="26.4" height="9.4" fill="#864e42"/><rect x="609.0" y="132.2" width="4.9" height="2.4" fill="#a8705a" opacity="0.8"/><rect x="608.8" y="135.9" width="8.1" height="3.1" fill="#6a3a30" opacity="0.8"/><rect x="614.9" y="135.3" width="3.1" height="3.1" fill="#8a5a4c" opacity="0.8"/><rect x="623.7" y="131.4" width="17.3" height="9.4" fill="#8a5a4c"/><rect x="632.6" y="135.5" width="6.8" height="2.8" fill="#7a4438" opacity="0.8"/><rect x="634.2" y="136.9" width="4.4" height="3.4" fill="#9c6450" opacity="0.8"/><rect x="625.8" y="135.9" width="6.6" height="3.7" fill="#b88468" opacity="0.8"/><rect x="508.5" y="142" width="132.5" height="1.5" fill="#e8bcae"/><rect x="641" y="87" width="27" height="86" rx="12" fill="#1c2430"/>
<rect x="641" y="87" width="15" height="56" fill="#3a3230" opacity="0.6"/>
<circle cx="655" cy="89" r="9" fill="#c4c4c4"/>
<circle cx="655" cy="122.7" r="9" fill="#c4c4c4"/>
<circle cx="655" cy="159" r="9" fill="#c4c4c4"/>
<text x="516" y="218.7" font-family="Liberation Sans" font-size="15.6" fill="#b8d0e6" letter-spacing="1.6">2048x2048 - C8</text>

<!-- wires -->
<path d="M666 123C698 121 718 104 728 84" fill="none" stroke="#b0bccb" stroke-width="4.2"/>
<path d="M666 159C760 156 870 120 935 84" fill="none" stroke="#b0bccb" stroke-width="4.2"/>
<path d="M770 84C815 140 860 205 930 207.5" fill="none" stroke="#6a4a20" stroke-width="6" opacity="0.5"/>
<path d="M770 84C815 140 860 205 930 207.5" fill="none" stroke="#f2b55a" stroke-width="4.3"/>

<!-- light node 1 -->
<rect x="928" y="128" width="160" height="159.5" fill="#1b2028"/>
<rect x="934" y="133" width="148" height="31" fill="#8e1218"/>
<rect x="934" y="164" width="148" height="117" fill="#060606"/><rect x="935.6" y="166.2" width="33.5" height="1.3" fill="#b0b0b0"/><rect x="973.3" y="166.2" width="25.7" height="1.3" fill="#b0b0b0"/><rect x="1001.2" y="166.2" width="37.3" height="1.3" fill="#b0b0b0"/><rect x="1043.5" y="166.2" width="27.0" height="1.3" fill="#b0b0b0"/><rect x="1074.0" y="166.2" width="8.0" height="1.3" fill="#b0b0b0"/><rect x="988.2" y="170.8" width="1.2" height="1" fill="#8a8a8a"/><rect x="1068.5" y="172.1" width="2.3" height="1" fill="#5a5a5a"/><rect x="1046.5" y="168.7" width="2.3" height="1" fill="#cccccc"/><rect x="1012.9" y="172.1" width="2.9" height="1" fill="#cccccc"/><rect x="937.4" y="172.7" width="1.3" height="1" fill="#8a8a8a"/><rect x="1000.2" y="170.4" width="2.0" height="1" fill="#cccccc"/><rect x="956.1" y="171.8" width="2.4" height="1" fill="#8a8a8a"/><rect x="944.9" y="166.2" width="3.0" height="1" fill="#5a5a5a"/><rect x="1044.2" y="173.0" width="2.7" height="1" fill="#5a5a5a"/><rect x="944.4" y="170.5" width="2.7" height="1" fill="#cccccc"/><rect x="963.4" y="174.9" width="3.7" height="1" fill="#cccccc"/><rect x="976.6" y="175.3" width="2.5" height="1" fill="#cccccc"/><rect x="1079.2" y="168.4" width="1.1" height="1" fill="#8a8a8a"/><rect x="957.2" y="172.4" width="3.9" height="1" fill="#8a8a8a"/><rect x="938.9" y="176.7" width="28.4" height="1.3" fill="#b0b0b0"/><rect x="972.0" y="176.7" width="16.2" height="1.3" fill="#b0b0b0"/><rect x="992.3" y="176.7" width="28.6" height="1.3" fill="#b0b0b0"/><rect x="1025.0" y="176.7" width="14.7" height="1.3" fill="#b0b0b0"/><rect x="1041.5" y="176.7" width="20.9" height="1.3" fill="#b0b0b0"/><rect x="1068.0" y="176.7" width="14.0" height="1.3" fill="#b0b0b0"/><rect x="978.8" y="175.5" width="1.2" height="1" fill="#8a8a8a"/><rect x="1047.4" y="178.8" width="3.1" height="1" fill="#5a5a5a"/><rect x="1009.9" y="182.2" width="1.7" height="1" fill="#8a8a8a"/><rect x="1074.4" y="181.4" width="3.6" height="1" fill="#cccccc"/><rect x="1007.9" y="182.3" width="3.8" height="1" fill="#8a8a8a"/><rect x="957.7" y="175.1" width="3.4" height="1" fill="#5a5a5a"/><rect x="1004.5" y="184.3" width="1.2" height="1" fill="#cccccc"/><rect x="1030.1" y="174.7" width="1.7" height="1" fill="#cccccc"/><rect x="944.1" y="178.4" width="3.7" height="1" fill="#8a8a8a"/><rect x="1042.9" y="180.0" width="1.8" height="1" fill="#5a5a5a"/><rect x="1010.7" y="183.0" width="1.1" height="1" fill="#8a8a8a"/><rect x="1065.3" y="178.7" width="1.5" height="1" fill="#cccccc"/><rect x="1021.8" y="179.4" width="2.7" height="1" fill="#cccccc"/><rect x="979.0" y="180.7" width="1.8" height="1" fill="#5a5a5a"/><rect x="934.1" y="187.2" width="33.4" height="1.3" fill="#b0b0b0"/><rect x="973.2" y="187.2" width="8.9" height="1.3" fill="#b0b0b0"/><rect x="986.1" y="187.2" width="31.8" height="1.3" fill="#b0b0b0"/><rect x="1023.1" y="187.2" width="29.6" height="1.3" fill="#b0b0b0"/><rect x="1055.1" y="187.2" width="23.0" height="1.3" fill="#b0b0b0"/><rect x="1066.2" y="186.4" width="1.3" height="1" fill="#8a8a8a"/><rect x="961.3" y="192.5" width="3.4" height="1" fill="#8a8a8a"/><rect x="1060.6" y="192.7" width="1.4" height="1" fill="#5a5a5a"/><rect x="1071.5" y="189.6" width="3.7" height="1" fill="#5a5a5a"/><rect x="958.2" y="187.0" width="2.1" height="1" fill="#5a5a5a"/><rect x="1042.7" y="193.9" width="2.8" height="1" fill="#5a5a5a"/><rect x="1061.6" y="194.1" width="3.4" height="1" fill="#8a8a8a"/><rect x="990.6" y="195.2" width="2.2" height="1" fill="#5a5a5a"/><rect x="959.6" y="193.3" width="1.8" height="1" fill="#5a5a5a"/><rect x="1022.4" y="193.7" width="1.7" height="1" fill="#8a8a8a"/><rect x="979.2" y="195.6" width="1.9" height="1" fill="#5a5a5a"/><rect x="1051.2" y="190.7" width="2.7" height="1" fill="#5a5a5a"/><rect x="1021.8" y="190.9" width="3.2" height="1" fill="#5a5a5a"/><rect x="979.3" y="193.2" width="2.6" height="1" fill="#5a5a5a"/><rect x="935.9" y="197.7" width="30.8" height="1.3" fill="#b0b0b0"/><rect x="969.3" y="197.7" width="15.4" height="1.3" fill="#b0b0b0"/><rect x="986.1" y="197.7" width="32.3" height="1.3" fill="#b0b0b0"/><rect x="1021.6" y="197.7" width="40.1" height="1.3" fill="#b0b0b0"/><rect x="1065.9" y="197.7" width="16.1" height="1.3" fill="#b0b0b0"/><rect x="1076.7" y="201.4" width="3.8" height="1" fill="#5a5a5a"/><rect x="1028.1" y="200.6" width="2.6" height="1" fill="#cccccc"/><rect x="1061.8" y="196.1" width="1.1" height="1" fill="#5a5a5a"/><rect x="997.4" y="198.3" width="3.1" height="1" fill="#cccccc"/><rect x="1039.7" y="200.8" width="1.7" height="1" fill="#cccccc"/><rect x="981.8" y="198.0" width="3.7" height="1" fill="#5a5a5a"/><rect x="946.5" y="201.1" width="2.5" height="1" fill="#5a5a5a"/><rect x="1022.3" y="197.9" width="2.3" height="1" fill="#5a5a5a"/><rect x="1044.7" y="203.3" width="3.6" height="1" fill="#5a5a5a"/><rect x="1053.8" y="198.4" width="2.4" height="1" fill="#cccccc"/><rect x="990.3" y="202.7" width="3.5" height="1" fill="#5a5a5a"/><rect x="1078.4" y="195.4" width="1.9" height="1" fill="#cccccc"/><rect x="1061.8" y="203.9" width="1.3" height="1" fill="#8a8a8a"/><rect x="945.6" y="198.9" width="3.8" height="1" fill="#5a5a5a"/><rect x="941.4" y="208.2" width="44.4" height="1.3" fill="#b0b0b0"/><rect x="991.8" y="208.2" width="14.2" height="1.3" fill="#b0b0b0"/><rect x="1009.1" y="208.2" width="33.1" height="1.3" fill="#b0b0b0"/><rect x="1045.1" y="208.2" width="29.5" height="1.3" fill="#b0b0b0"/><rect x="1076.5" y="208.2" width="5.5" height="1.3" fill="#b0b0b0"/><rect x="1009.1" y="217.1" width="3.9" height="1" fill="#5a5a5a"/><rect x="1008.0" y="208.7" width="3.1" height="1" fill="#5a5a5a"/><rect x="989.3" y="217.1" width="2.4" height="1" fill="#cccccc"/><rect x="1001.3" y="213.8" width="3.0" height="1" fill="#5a5a5a"/><rect x="990.2" y="209.1" width="1.6" height="1" fill="#8a8a8a"/><rect x="939.0" y="215.5" width="3.8" height="1" fill="#5a5a5a"/><rect x="987.7" y="206.7" width="2.7" height="1" fill="#cccccc"/><rect x="1022.7" y="214.2" width="1.7" height="1" fill="#8a8a8a"/><rect x="1071.5" y="207.6" width="3.9" height="1" fill="#8a8a8a"/><rect x="1000.3" y="216.5" width="2.1" height="1" fill="#8a8a8a"/><rect x="1017.3" y="216.7" width="2.3" height="1" fill="#8a8a8a"/><rect x="979.1" y="210.8" width="3.6" height="1" fill="#8a8a8a"/><rect x="966.9" y="215.4" width="3.5" height="1" fill="#cccccc"/><rect x="1063.0" y="206.0" width="2.7" height="1" fill="#8a8a8a"/><rect x="938.4" y="218.7" width="38.8" height="1.3" fill="#b0b0b0"/><rect x="983.1" y="218.7" width="32.3" height="1.3" fill="#b0b0b0"/><rect x="1017.2" y="218.7" width="26.4" height="1.3" fill="#b0b0b0"/><rect x="1047.3" y="218.7" width="27.8" height="1.3" fill="#b0b0b0"/><rect x="1078.5" y="218.7" width="3.5" height="1.3" fill="#b0b0b0"/><rect x="956.3" y="218.1" width="1.9" height="1" fill="#5a5a5a"/><rect x="1025.6" y="227.0" width="1.2" height="1" fill="#8a8a8a"/><rect x="961.2" y="217.5" width="3.5" height="1" fill="#cccccc"/><rect x="973.4" y="217.0" width="1.1" height="1" fill="#cccccc"/><rect x="974.2" y="225.8" width="2.2" height="1" fill="#8a8a8a"/><rect x="949.2" y="227.5" width="2.6" height="1" fill="#cccccc"/><rect x="963.0" y="218.6" width="3.9" height="1" fill="#cccccc"/><rect x="945.4" y="226.2" width="1.6" height="1" fill="#8a8a8a"/><rect x="1040.2" y="223.6" width="2.9" height="1" fill="#5a5a5a"/><rect x="959.4" y="224.8" width="2.5" height="1" fill="#8a8a8a"/><rect x="1060.2" y="221.6" width="1.1" height="1" fill="#cccccc"/><rect x="1033.2" y="218.9" width="3.3" height="1" fill="#5a5a5a"/><rect x="1011.9" y="227.2" width="3.9" height="1" fill="#cccccc"/><rect x="964.7" y="221.9" width="3.1" height="1" fill="#cccccc"/><rect x="934.1" y="229.2" width="21.0" height="1.3" fill="#b0b0b0"/><rect x="959.2" y="229.2" width="30.5" height="1.3" fill="#b0b0b0"/><rect x="994.4" y="229.2" width="31.9" height="1.3" fill="#b0b0b0"/><rect x="1028.2" y="229.2" width="42.4" height="1.3" fill="#b0b0b0"/><rect x="1074.3" y="229.2" width="7.7" height="1.3" fill="#b0b0b0"/><rect x="1079.7" y="233.5" width="3.3" height="1" fill="#5a5a5a"/><rect x="1046.0" y="238.3" width="3.7" height="1" fill="#8a8a8a"/><rect x="993.2" y="228.9" width="2.6" height="1" fill="#cccccc"/><rect x="1017.6" y="238.7" width="3.7" height="1" fill="#5a5a5a"/><rect x="1044.3" y="238.6" width="3.2" height="1" fill="#5a5a5a"/><rect x="949.6" y="237.9" width="2.6" height="1" fill="#5a5a5a"/><rect x="977.2" y="228.7" width="3.0" height="1" fill="#5a5a5a"/><rect x="1027.6" y="236.1" width="3.3" height="1" fill="#5a5a5a"/><rect x="965.0" y="229.0" width="3.5" height="1" fill="#8a8a8a"/><rect x="1005.5" y="230.0" width="2.6" height="1" fill="#cccccc"/><rect x="964.0" y="236.3" width="2.0" height="1" fill="#cccccc"/><rect x="1051.2" y="235.6" width="3.2" height="1" fill="#8a8a8a"/><rect x="989.0" y="231.5" width="1.0" height="1" fill="#5a5a5a"/><rect x="1060.5" y="230.4" width="3.5" height="1" fill="#cccccc"/><rect x="936.0" y="239.7" width="16.4" height="1.3" fill="#b0b0b0"/><rect x="957.0" y="239.7" width="38.1" height="1.3" fill="#b0b0b0"/><rect x="998.5" y="239.7" width="10.0" height="1.3" fill="#b0b0b0"/><rect x="1011.4" y="239.7" width="38.6" height="1.3" fill="#b0b0b0"/><rect x="1053.5" y="239.7" width="25.1" height="1.3" fill="#b0b0b0"/><rect x="1081.5" y="239.7" width="0.5" height="1.3" fill="#b0b0b0"/><rect x="1035.2" y="247.7" width="3.3" height="1" fill="#cccccc"/><rect x="1029.8" y="246.1" width="2.4" height="1" fill="#8a8a8a"/><rect x="1069.5" y="239.7" width="3.5" height="1" fill="#8a8a8a"/><rect x="1042.9" y="240.3" width="1.4" height="1" fill="#cccccc"/><rect x="949.2" y="244.7" width="2.9" height="1" fill="#5a5a5a"/><rect x="964.2" y="243.3" width="3.1" height="1" fill="#8a8a8a"/><rect x="938.7" y="248.1" width="3.8" height="1" fill="#5a5a5a"/><rect x="987.8" y="239.6" width="1.4" height="1" fill="#8a8a8a"/><rect x="972.3" y="247.2" width="1.2" height="1" fill="#5a5a5a"/><rect x="1029.6" y="237.6" width="3.2" height="1" fill="#5a5a5a"/><rect x="1036.8" y="243.2" width="2.6" height="1" fill="#5a5a5a"/><rect x="988.6" y="244.9" width="2.9" height="1" fill="#cccccc"/><rect x="954.8" y="242.1" width="2.3" height="1" fill="#5a5a5a"/><rect x="1000.7" y="243.5" width="1.7" height="1" fill="#8a8a8a"/><rect x="934.2" y="250.2" width="31.8" height="1.3" fill="#b0b0b0"/><rect x="969.3" y="250.2" width="16.2" height="1.3" fill="#b0b0b0"/><rect x="989.4" y="250.2" width="29.6" height="1.3" fill="#b0b0b0"/><rect x="1020.4" y="250.2" width="26.1" height="1.3" fill="#b0b0b0"/><rect x="1048.4" y="250.2" width="33.6" height="1.3" fill="#b0b0b0"/><rect x="981.9" y="250.4" width="1.1" height="1" fill="#8a8a8a"/><rect x="963.5" y="247.9" width="1.5" height="1" fill="#8a8a8a"/><rect x="966.3" y="249.1" width="2.6" height="1" fill="#8a8a8a"/><rect x="1025.8" y="249.3" width="1.4" height="1" fill="#5a5a5a"/><rect x="1036.1" y="254.3" width="1.3" height="1" fill="#8a8a8a"/><rect x="966.1" y="254.6" width="1.7" height="1" fill="#cccccc"/><rect x="1018.2" y="257.6" width="2.6" height="1" fill="#5a5a5a"/><rect x="1052.6" y="252.6" width="3.9" height="1" fill="#5a5a5a"/><rect x="986.2" y="257.2" width="1.1" height="1" fill="#cccccc"/><rect x="940.8" y="252.6" width="3.4" height="1" fill="#cccccc"/><rect x="960.6" y="258.9" width="1.2" height="1" fill="#cccccc"/><rect x="1047.3" y="256.4" width="2.6" height="1" fill="#8a8a8a"/><rect x="976.2" y="252.3" width="2.5" height="1" fill="#cccccc"/><rect x="990.8" y="257.4" width="1.2" height="1" fill="#cccccc"/><rect x="939.8" y="260.7" width="26.0" height="1.3" fill="#b0b0b0"/><rect x="971.0" y="260.7" width="13.1" height="1.3" fill="#b0b0b0"/><rect x="988.7" y="260.7" width="19.5" height="1.3" fill="#b0b0b0"/><rect x="1011.2" y="260.7" width="18.0" height="1.3" fill="#b0b0b0"/><rect x="1033.5" y="260.7" width="41.5" height="1.3" fill="#b0b0b0"/><rect x="1076.3" y="260.7" width="5.7" height="1.3" fill="#b0b0b0"/><rect x="1008.8" y="259.6" width="3.9" height="1" fill="#8a8a8a"/><rect x="1015.2" y="262.7" width="1.6" height="1" fill="#cccccc"/><rect x="1025.4" y="265.6" width="2.3" height="1" fill="#8a8a8a"/><rect x="996.1" y="260.7" width="1.1" height="1" fill="#8a8a8a"/><rect x="958.1" y="269.9" width="1.0" height="1" fill="#8a8a8a"/><rect x="1058.1" y="269.9" width="1.7" height="1" fill="#cccccc"/><rect x="1011.2" y="262.8" width="1.8" height="1" fill="#5a5a5a"/><rect x="1065.3" y="260.5" width="2.1" height="1" fill="#8a8a8a"/><rect x="982.0" y="269.0" width="3.5" height="1" fill="#8a8a8a"/><rect x="976.0" y="267.3" width="3.1" height="1" fill="#5a5a5a"/><rect x="1074.8" y="268.8" width="1.7" height="1" fill="#cccccc"/><rect x="981.8" y="262.9" width="3.9" height="1" fill="#8a8a8a"/><rect x="1039.3" y="258.6" width="2.7" height="1" fill="#cccccc"/><rect x="964.9" y="270.1" width="3.3" height="1" fill="#8a8a8a"/><rect x="941.9" y="271.2" width="40.3" height="1.3" fill="#b0b0b0"/><rect x="987.6" y="271.2" width="38.5" height="1.3" fill="#b0b0b0"/><rect x="1032.0" y="271.2" width="26.5" height="1.3" fill="#b0b0b0"/><rect x="1063.0" y="271.2" width="19.0" height="1.3" fill="#b0b0b0"/><rect x="1029.6" y="274.0" width="3.0" height="1" fill="#cccccc"/><rect x="1046.4" y="275.0" width="1.1" height="1" fill="#5a5a5a"/><rect x="934.6" y="269.9" width="2.4" height="1" fill="#cccccc"/><rect x="941.1" y="276.4" width="1.3" height="1" fill="#5a5a5a"/><rect x="1019.1" y="276.6" width="3.6" height="1" fill="#cccccc"/><rect x="994.4" y="273.5" width="3.2" height="1" fill="#8a8a8a"/><rect x="974.8" y="268.9" width="2.2" height="1" fill="#cccccc"/><rect x="1001.6" y="279.7" width="3.6" height="1" fill="#cccccc"/><rect x="1057.5" y="270.4" width="2.0" height="1" fill="#5a5a5a"/><rect x="985.4" y="276.4" width="3.5" height="1" fill="#cccccc"/><rect x="1050.0" y="270.7" width="3.9" height="1" fill="#8a8a8a"/><rect x="958.4" y="273.0" width="1.6" height="1" fill="#8a8a8a"/><rect x="940.2" y="269.1" width="2.0" height="1" fill="#5a5a5a"/><rect x="1014.9" y="279.0" width="3.5" height="1" fill="#5a5a5a"/><text x="1008" y="152.8" text-anchor="middle" font-family="Liberation Sans" font-weight="bold" font-size="13" fill="#fff">Light</text>
<circle cx="934" cy="207.6" r="13" fill="#2a2a2a"/><circle cx="934" cy="207.6" r="9" fill="#f4b048"/><circle cx="934" cy="207.6" r="3.6" fill="#b87818"/>
<circle cx="1080" cy="207.6" r="13" fill="#2a2a2a"/><circle cx="1080" cy="207.6" r="9" fill="#c8c8c8"/>
<text x="940" y="303.2" font-family="Liberation Sans" font-size="15.6" fill="#b8d0e6" letter-spacing="1.5">2048x2048 - L16</text>

<!-- tiles 025 node -->
<rect x="537.3" y="309.7" width="159.7" height="266" fill="#e2e0e0"/>
<rect x="544" y="316" width="146.8" height="253" fill="#aa141c"/>
<rect x="544" y="316" width="146.8" height="29" fill="#8e1218"/>
<rect x="544" y="370" width="132" height="146" fill="url(#hexs)"/>
<rect x="544" y="369" width="132" height="1.5" fill="#e8b8b0"/>
<rect x="544" y="516" width="132" height="1.5" fill="#e8b8b0"/>
<rect x="676" y="370" width="14.8" height="146" fill="#555"/>
<rect x="677" y="340" width="25.5" height="206" rx="12.7" fill="#262626"/>
<rect x="681" y="352" width="13" height="170" fill="#555" opacity="0.75"/>
<text x="619.2" y="334.4" text-anchor="middle" font-family="Liberation Sans" font-weight="bold" font-size="12.8" fill="#fff">Tiles 025</text>
<circle cx="537.2" cy="309.5" r="20.5" fill="#1a1a1a" stroke="#c4d2de" stroke-width="2.6"/>
<circle cx="587.5" cy="309.5" r="20.5" fill="#1a1a1a" stroke="#e6d2d2" stroke-width="2.6"/>
<path d="M529 298H539L545 304V321H529Z" fill="#d8d8d8"/><path d="M539 298V304H545" fill="#888" /><path d="M532 310H543M532 314H543M532 318H543" stroke="#1a1a1a" stroke-width="1.6"/><path d="M531 310h0.1M531 314h0.1" stroke="#1a1a1a"/>
<rect x="577" y="299" width="21" height="21" fill="#d8d8d8"/><rect x="577.5" y="299.5" width="10" height="10" fill="#1a1a1a"/><rect x="587.5" y="309.5" width="10" height="10" fill="#1a1a1a"/>
<circle cx="690.4" cy="353.6" r="13" fill="#262626"/><circle cx="690.4" cy="353.6" r="8.8" fill="#f4a838"/>
<circle cx="690.4" cy="389.3" r="13" fill="#262626"/>
<circle cx="690.4" cy="425" r="13" fill="#262626"/><circle cx="690.4" cy="425" r="8.8" fill="#c4c4c4"/>
<circle cx="690.4" cy="460.7" r="13" fill="#262626"/><circle cx="690.4" cy="460.7" r="8.8" fill="#c4c4c4"/>
<circle cx="690.4" cy="496.3" r="13" fill="#262626"/><circle cx="690.4" cy="496.3" r="8.8" fill="#c4c4c4"/>
<circle cx="690.4" cy="532" r="13" fill="#262626"/><circle cx="690.4" cy="532" r="8.8" fill="#c4c4c4"/>
<text x="552.8" y="591.8" font-family="Liberation Sans" font-size="15.6" fill="#c8c8c8" letter-spacing="1.5">2048x2048 - C8</text>
<g font-family="Liberation Sans" font-weight="bold" font-size="13.5" fill="#a2a2a2" letter-spacing="0">
<text x="717.5" y="359">Base Color</text>
<text x="717.5" y="394.5">Normal</text>
<text x="717.5" y="429.8">Roughness</text>
<text x="717.5" y="465.2">Metallic</text>
<text x="717.5" y="500.7">Height</text>
<text x="717.5" y="536.6">Ambient Occlusion</text>
</g>

<!-- light node 2 -->
<rect x="910" y="363" width="159" height="159" fill="#2e2a2b"/>
<rect x="917" y="369.3" width="146.3" height="146.7" fill="#000"/>
<text x="990" y="387.9" text-anchor="middle" font-family="Liberation Sans" font-weight="bold" font-size="13" fill="#fff">Light</text>
<path d="M692 389.5C775 389 830 443 917 443" fill="none" stroke="#6a4a20" stroke-width="6.5" opacity="0.45"/>
<path d="M692 389.5C775 389 830 443 917 443" fill="none" stroke="#f2aa48" stroke-width="4.6"/>
<circle cx="917" cy="442.7" r="13.5" fill="#fbf4ea"/><circle cx="917" cy="442.7" r="9" fill="#f4a838"/><circle cx="917" cy="442.7" r="4" fill="#e09020" stroke="#c88020" stroke-width="1"/>
<circle cx="1063" cy="442.7" r="13" fill="#2c2c2c"/><circle cx="1063" cy="442.7" r="9" fill="#c4c4c4"/>
<text x="921.8" y="538.3" font-family="Liberation Sans" font-size="15.6" fill="#c8c8c8" letter-spacing="1.45">2048x2048 - L16</text>

<!-- normal pin glow -->
<defs><radialGradient id="glow"><stop offset="0.55" stop-color="#40c8e8" stop-opacity="0.9"/><stop offset="1" stop-color="#2080a0" stop-opacity="0"/></radialGradient></defs>
<circle cx="691" cy="391" r="17" fill="url(#glow)"/>
<circle cx="690.4" cy="389.3" r="8.8" fill="#8ac8b8"/>
<circle cx="693" cy="392" r="6" fill="#f4a838"/>
<circle cx="695" cy="398" r="4" fill="#1a3040" opacity="0.8"/>
<path d="M696 395L696 410L699.5 406.5L702.5 412L704.5 411L701.5 405.5L706 405.5Z" fill="#fff" stroke="#000" stroke-width="1"/>

<!-- status -->
<g font-family="Liberation Sans" font-size="14.3" fill="#e2e2a6">
<text x="375.5" y="592.6" letter-spacing="0.8">No output node defined</text>
<text x="375.5" y="610.5" letter-spacing="0.84">Referenced resource not found: pkg:///Preview (5 times)</text>
</g>
</svg>

<!-- bottom panels -->

<div class="a" style="left:369px;top:618px;width:342px;height:38px;background:#262626"></div>
<div class="a" style="left:369px;top:656px;width:342px;height:33px;background:#2f2f2f"></div>
<div class="a" style="left:369px;top:689px;width:44px;height:365px;background:#2b2b2b"></div>
<div class="a" style="left:413px;top:689px;width:298px;height:365px;background:#1f1f1f"></div>
<svg style="left:378px;top:625px" width="24" height="24" viewBox="0 0 24 24"><path d="M12 1L22 6V17L12 23L2 17V6Z" fill="#d8d8d8"/><path d="M2 6L12 11L22 6M12 11V23" fill="none" stroke="#262626" stroke-width="1.3"/></svg>
<div class="t" style="left:412px;top:629px;font-size:17px;color:#e6e6e6;letter-spacing:0.7px">Plane ···D VIEW</div>
<svg style="left:569px;top:628px" width="22" height="22" viewBox="0 0 22 22"><path d="M12 2L20 10L17 11L14 14L14 18L4 8L8 8L11 5Z" fill="#d8d8d8"/><path d="M8 14L1.5 20.5" stroke="#d8d8d8" stroke-width="1.8"/></svg>
<svg style="left:610px;top:631px" width="16" height="16" viewBox="0 0 16 16"><rect x="1" y="1" width="14" height="14" fill="none" stroke="#d8d8d8" stroke-width="2"/><rect x="1" y="8" width="7" height="7" fill="#d8d8d8"/></svg>
<svg style="left:646px;top:630px" width="19" height="19" viewBox="0 0 19 19"><path d="M1 6V1H6M13 1H18V6M18 13V18H13M6 18H1V13" fill="none" stroke="#d8d8d8" stroke-width="2"/><rect x="5" y="5" width="9" height="9" fill="#d8d8d8"/></svg>
<svg style="left:685px;top:631px" width="16" height="16" viewBox="0 0 16 16"><path d="M1 1L15 15M15 1L1 15" stroke="#d8d8d8" stroke-width="1.6"/></svg>
<div class="t" style="left:384px;top:666.5px;font-size:16px;color:#c6c6c6">Scene</div>
<div class="t" style="left:460px;top:666.5px;font-size:16px;color:#c6c6c6;letter-spacing:0.35px">Materials</div>
<div class="t" style="left:559px;top:666.5px;font-size:16px;color:#c6c6c6">Lights</div>
<svg style="left:690px;top:669px" width="14" height="12" viewBox="0 0 14 12"><path d="M1 1L5.5 6L1 11M7 1L11.5 6L7 11" fill="none" stroke="#cfcfcf" stroke-width="1.5"/></svg>
<!-- 3d toolbar -->
<div class="a" style="left:372px;top:700px;width:38px;height:1.5px;background:#151515"></div>
<div class="a" style="left:372px;top:703px;width:38px;height:1.5px;background:#151515"></div>
<div class="a" style="left:371px;top:714px;width:40px;height:36px;background:#464646;border-radius:4px"></div>
<svg style="left:376px;top:722px" width="30" height="20" viewBox="0 0 30 20"><rect x="2" y="2" width="17" height="16" rx="2" fill="#d8d8d8"/><path d="M20 10L28 4V16Z" fill="#d8d8d8"/></svg>
<svg style="left:378px;top:756px" width="24" height="28" viewBox="0 0 24 28"><path d="M12 1A9 9 0 0 0 6 17C7 18 8 19 8 21H16C16 19 17 18 18 17A9 9 0 0 0 12 1Z" fill="#d8d8d8"/><rect x="8" y="22" width="8" height="3" rx="1" fill="#d8d8d8"/><path d="M7 9A5 5 0 0 1 10 5" stroke="#2b2b2b" stroke-width="1.2" fill="none"/></svg>
<svg style="left:376px;top:792px" width="28" height="27" viewBox="0 0 28 27"><path d="M2 24V9H7M2 24H26V13" fill="none" stroke="#d8d8d8" stroke-width="1.6"/><path d="M2 24L9 14L14 19L19 13L26 20V24Z" fill="#d8d8d8"/><circle cx="14" cy="11" r="2.6" fill="#d8d8d8"/><path d="M14 2V6M8 5L11 8M20 5L17 8M19 11H25" stroke="#d8d8d8" stroke-width="1.6"/></svg>
<div class="a" style="left:371px;top:826px;width:40px;height:36px;background:#464646;border-radius:4px"></div>
<svg style="left:377px;top:833px" width="28" height="24" viewBox="0 0 28 24"><rect x="2" y="1" width="24" height="16" rx="1.5" fill="#d8d8d8"/><path d="M19.07 7.87L19.07 10.13L17.63 10.12L17.36 10.77L18.39 11.79L16.79 13.39L15.77 12.36L15.12 12.63L15.13 14.07L12.87 14.07L12.88 12.63L12.23 12.36L11.21 13.39L9.61 11.79L10.64 10.77L10.37 10.12L8.93 10.13L8.93 7.87L10.37 7.88L10.64 7.23L9.61 6.21L11.21 4.61L12.23 5.64L12.88 5.37L12.87 3.93L15.13 3.93L15.12 5.37L15.77 5.64L16.79 4.61L18.39 6.21L17.36 7.23L17.63 7.88Z" fill="#464646"/><circle cx="14" cy="9" r="1.5" fill="#d8d8d8"/><rect x="9" y="20" width="10" height="2" fill="#d8d8d8"/></svg>
<div class="a" style="left:369px;top:863px;width:44px;height:2px;background:#1c1c1c"></div>
<div class="a" style="left:372px;top:875px;width:38px;height:1.5px;background:#151515"></div>
<div class="a" style="left:372px;top:878px;width:38px;height:1.5px;background:#151515"></div>
<svg style="left:377px;top:895px" width="24" height="25" viewBox="0 0 24 25"><rect x="1.5" y="1.5" width="21" height="22" fill="none" stroke="#cfcfcf" stroke-width="1.5"/><path d="M12 1.5L22.5 12.5L12 23.5L1.5 12.5Z M1.5 12.5H22.5M12 1.5V23.5" fill="none" stroke="#cfcfcf" stroke-width="1.3"/></svg>
<svg style="left:377px;top:934px" width="26" height="26" viewBox="0 0 26 26"><path d="M11 16V3M11 16H23M11 16L3 24" fill="none" stroke="#cfcfcf" stroke-width="1.6"/><path d="M8 5L11 1L14 5M21 13L25 16L21 19M2 20L2 25L7 25" fill="none" stroke="#cfcfcf" stroke-width="1.6"/></svg>
<div class="a" style="left:371px;top:966px;width:40px;height:36px;background:#4a4a4a;border-radius:4px"></div>
<svg style="left:377px;top:969px" width="26" height="30" viewBox="0 0 26 30"><path d="M13 2L24 8V21L13 28L2 21V8Z M2 8L13 14L24 8M13 14V28" fill="none" stroke="#d8d8d8" stroke-width="1.6" stroke-linejoin="round"/><circle cx="13" cy="7" r="1" fill="#d8d8d8"/><circle cx="7" cy="17" r="1" fill="#d8d8d8"/><circle cx="18" cy="16" r="1" fill="#d8d8d8"/><circle cx="21" cy="20" r="1" fill="#d8d8d8"/></svg>
<svg style="left:372px;top:1036px" width="12" height="8" viewBox="0 0 12 8"><path d="M1 1L5 5M6 1L10 5" stroke="#bbb" stroke-width="1.4"/></svg>
<div class="a" style="left:369px;top:1041px;width:44px;height:2px;background:#151515"></div>
<svg style="left:413px;top:689px" width="298" height="365" viewBox="413 689 298 365"><polygon points="453.4,777.5 681.3,772.5 685.5,1000.4 456.3,1004.6" fill="#6b737b"/></svg>

<div class="a" style="left:711px;top:618px;width:3px;height:436px;background:#151515"></div>
<!-- 2D view -->
<div class="a" style="left:714px;top:618px;width:381px;height:38px;background:#262626"></div>
<div class="a" style="left:714px;top:656px;width:381px;height:39px;background:#2f2f2f"></div>
<div class="a" style="left:714px;top:994px;width:381px;height:60px;background:#1f1f1f;border-top:2px solid #080808"></div>
<svg style="left:723px;top:626px" width="24" height="23" viewBox="0 0 24 23"><rect x="1" y="1" width="22" height="21" fill="#d8d8d8"/><rect x="2" y="2" width="10" height="10" fill="#1c1c1c"/><rect x="12" y="11.5" width="10" height="10" fill="#1c1c1c"/></svg>
<div class="t" style="left:758px;top:629px;font-size:17px;color:#e6e6e6;letter-spacing:0.68px">Tiles_02··· 2D VIEW</div>
<svg style="left:953px;top:628px" width="22" height="22" viewBox="0 0 22 22"><path d="M12 2L20 10L17 11L14 14L14 18L4 8L8 8L11 5Z" fill="#d8d8d8"/><path d="M8 14L1.5 20.5" stroke="#d8d8d8" stroke-width="1.8"/></svg>
<svg style="left:994px;top:631px" width="16" height="16" viewBox="0 0 16 16"><rect x="1" y="1" width="14" height="14" fill="none" stroke="#d8d8d8" stroke-width="2"/><rect x="1" y="8" width="7" height="7" fill="#d8d8d8"/></svg>
<svg style="left:1030px;top:630px" width="19" height="19" viewBox="0 0 19 19"><path d="M1 6V1H6M13 1H18V6M18 13V18H13M6 18H1V13" fill="none" stroke="#d8d8d8" stroke-width="2"/><rect x="5" y="5" width="9" height="9" fill="#d8d8d8"/></svg>
<svg style="left:1069px;top:631px" width="16" height="16" viewBox="0 0 16 16"><path d="M1 1L15 15M15 1L1 15" stroke="#d8d8d8" stroke-width="1.6"/></svg>
<!-- 2d toolbar -->
<svg style="left:722px;top:662px" width="26" height="26" viewBox="0 0 26 26"><rect x="1.5" y="1.5" width="17" height="17" fill="none" stroke="#d0d0d0" stroke-width="1.8"/><path d="M6 20V24.5H24.5V6H20" fill="none" stroke="#d0d0d0" stroke-width="1.8"/><rect x="19" y="12" width="5" height="12" fill="#d0d0d0"/><circle cx="21.5" cy="15" r="1" fill="#2f2f2f"/></svg>
<svg style="left:766px;top:662px" width="26" height="26" viewBox="0 0 26 26"><path d="M1 1H20L25 6V25H1Z" fill="#d4d4d4"/><rect x="6" y="1" width="12" height="7" fill="#2f2f2f"/><rect x="13" y="2" width="3" height="5" fill="#d4d4d4"/><circle cx="5" cy="21" r="1.2" fill="#2f2f2f"/></svg>
<svg style="left:810px;top:662px" width="23" height="26" viewBox="0 0 23 26"><path d="M1 3H13V20H1Z" fill="#d0d0d0"/><path d="M6 8H16L22 14V25H6Z" fill="#d0d0d0" stroke="#2f2f2f" stroke-width="1.2"/></svg>
<svg style="left:854px;top:663px" width="26" height="25" viewBox="0 0 26 25"><rect x="1.5" y="1.5" width="23" height="22" fill="none" stroke="#505050" stroke-width="2"/><circle cx="13" cy="13" r="6" fill="#505050"/><path d="M15 16L19 20L24 13" stroke="#505050" stroke-width="2" fill="none"/></svg>
<div class="t" style="left:898px;top:667px;font-size:16px;color:#5a5a5a;letter-spacing:1px">UV</div>
<svg style="left:936px;top:671px" width="12" height="8" viewBox="0 0 12 8"><path d="M1 1L6 6L11 1" fill="none" stroke="#5a5a5a" stroke-width="1.5"/></svg>
<div class="t" style="left:965.5px;top:659.5px;font-size:35px;font-family:'Liberation Serif',serif;font-style:italic;font-weight:bold;color:#d8d8d8">i</div>
<svg style="left:999px;top:663px" width="27" height="25" viewBox="0 0 27 25"><path d="M2 24H26" stroke="#d0d0d0" stroke-width="1.6"/><rect x="3" y="1" width="2.5" height="22" fill="#d0d0d0"/><rect x="8" y="7" width="2.5" height="16" fill="#d0d0d0"/><rect x="13" y="5" width="2.5" height="18" fill="#d0d0d0"/><rect x="18" y="13" width="2.5" height="10" fill="#d0d0d0"/><rect x="22" y="17" width="2.5" height="6" fill="#d0d0d0"/></svg>
<svg style="left:714px;top:695px;overflow:hidden" width="380" height="299" viewBox="714 695 380 299"><defs><filter id="blr" x="-20%" y="-20%" width="140%" height="140%"><feGaussianBlur stdDeviation="4"/></filter><filter id="blr2"><feGaussianBlur stdDeviation="1.2"/></filter><filter id="grn" x="0" y="0" width="100%" height="100%"><feTurbulence type="fractalNoise" baseFrequency="0.75" numOctaves="2" seed="4"/><feColorMatrix type="matrix" values="0 0 0 0 0.5 0 0 0 0 0.5 0 0 0 0 0.5 2.2 0 0 0 -1.0"/></filter></defs><rect x="714" y="695" width="380" height="299" fill="#8c8a86"/><g filter="url(#blr2)"><polygon points="605.2,656.7 543.2,620.9 543.2,549.3 605.2,513.5 667.3,549.3 667.3,620.9" fill="none" stroke="#74726e" stroke-width="3.2"/><polygon points="740.0,656.7 678.0,620.9 678.0,549.3 740.0,513.5 802.0,549.3 802.0,620.9" fill="none" stroke="#74726e" stroke-width="3.2"/><polygon points="874.8,656.7 812.7,620.9 812.7,549.3 874.8,513.5 936.8,549.3 936.8,620.9" fill="none" stroke="#74726e" stroke-width="3.2"/><polygon points="1009.5,656.7 947.5,620.9 947.5,549.3 1009.5,513.5 1071.5,549.3 1071.5,620.9" fill="none" stroke="#74726e" stroke-width="3.2"/><polygon points="1144.3,656.7 1082.3,620.9 1082.3,549.3 1144.3,513.5 1206.3,549.3 1206.3,620.9" fill="none" stroke="#74726e" stroke-width="3.2"/><polygon points="672.6,773.4 610.6,737.6 610.6,666.0 672.6,630.2 734.7,666.0 734.7,737.6" fill="none" stroke="#74726e" stroke-width="3.2"/><polygon points="807.4,773.4 745.4,737.6 745.4,666.0 807.4,630.2 869.4,666.0 869.4,737.6" fill="none" stroke="#74726e" stroke-width="3.2"/><polygon points="942.2,773.4 880.1,737.6 880.1,666.0 942.2,630.2 1004.2,666.0 1004.2,737.6" fill="none" stroke="#74726e" stroke-width="3.2"/><polygon points="1076.9,773.4 1014.9,737.6 1014.9,666.0 1076.9,630.2 1138.9,666.0 1138.9,737.6" fill="none" stroke="#74726e" stroke-width="3.2"/><polygon points="605.2,890.1 543.2,854.3 543.2,782.7 605.2,746.9 667.3,782.7 667.3,854.3" fill="none" stroke="#74726e" stroke-width="3.2"/><polygon points="740.0,890.1 678.0,854.3 678.0,782.7 740.0,746.9 802.0,782.7 802.0,854.3" fill="none" stroke="#74726e" stroke-width="3.2"/><polygon points="874.8,890.1 812.7,854.3 812.7,782.7 874.8,746.9 936.8,782.7 936.8,854.3" fill="none" stroke="#74726e" stroke-width="3.2"/><polygon points="1009.5,890.1 947.5,854.3 947.5,782.7 1009.5,746.9 1071.5,782.7 1071.5,854.3" fill="none" stroke="#74726e" stroke-width="3.2"/><polygon points="1144.3,890.1 1082.3,854.3 1082.3,782.7 1144.3,746.9 1206.3,782.7 1206.3,854.3" fill="none" stroke="#74726e" stroke-width="3.2"/><polygon points="672.6,1006.8 610.6,971.0 610.6,899.4 672.6,863.6 734.7,899.4 734.7,971.0" fill="none" stroke="#74726e" stroke-width="3.2"/><polygon points="807.4,1006.8 745.4,971.0 745.4,899.4 807.4,863.6 869.4,899.4 869.4,971.0" fill="none" stroke="#74726e" stroke-width="3.2"/><polygon points="942.2,1006.8 880.1,971.0 880.1,899.4 942.2,863.6 1004.2,899.4 1004.2,971.0" fill="none" stroke="#74726e" stroke-width="3.2"/><polygon points="1076.9,1006.8 1014.9,971.0 1014.9,899.4 1076.9,863.6 1138.9,899.4 1138.9,971.0" fill="none" stroke="#74726e" stroke-width="3.2"/><polygon points="605.2,1123.5 543.2,1087.7 543.2,1016.1 605.2,980.3 667.3,1016.1 667.3,1087.7" fill="none" stroke="#74726e" stroke-width="3.2"/><polygon points="740.0,1123.5 678.0,1087.7 678.0,1016.1 740.0,980.3 802.0,1016.1 802.0,1087.7" fill="none" stroke="#74726e" stroke-width="3.2"/><polygon points="874.8,1123.5 812.7,1087.7 812.7,1016.1 874.8,980.3 936.8,1016.1 936.8,1087.7" fill="none" stroke="#74726e" stroke-width="3.2"/><polygon points="1009.5,1123.5 947.5,1087.7 947.5,1016.1 1009.5,980.3 1071.5,1016.1 1071.5,1087.7" fill="none" stroke="#74726e" stroke-width="3.2"/><polygon points="1144.3,1123.5 1082.3,1087.7 1082.3,1016.1 1144.3,980.3 1206.3,1016.1 1206.3,1087.7" fill="none" stroke="#74726e" stroke-width="3.2"/><polygon points="605.2,654.3 545.3,619.7 545.3,550.5 605.2,515.9 665.2,550.5 665.2,619.7" fill="#aba8a2"/><polygon points="740.0,654.3 680.1,619.7 680.1,550.5 740.0,515.9 799.9,550.5 799.9,619.7" fill="#aba8a2"/><polygon points="874.8,654.3 814.8,619.7 814.8,550.5 874.8,515.9 934.7,550.5 934.7,619.7" fill="#aba8a2"/><polygon points="1009.5,654.3 949.6,619.7 949.6,550.5 1009.5,515.9 1069.4,550.5 1069.4,619.7" fill="#aba8a2"/><polygon points="1144.3,654.3 1084.3,619.7 1084.3,550.5 1144.3,515.9 1204.2,550.5 1204.2,619.7" fill="#aba8a2"/><polygon points="672.6,771.0 612.7,736.4 612.7,667.2 672.6,632.6 732.6,667.2 732.6,736.4" fill="#aba8a2"/><polygon points="807.4,771.0 747.5,736.4 747.5,667.2 807.4,632.6 867.3,667.2 867.3,736.4" fill="#aba8a2"/><polygon points="942.2,771.0 882.2,736.4 882.2,667.2 942.2,632.6 1002.1,667.2 1002.1,736.4" fill="#aba8a2"/><polygon points="1076.9,771.0 1017.0,736.4 1017.0,667.2 1076.9,632.6 1136.8,667.2 1136.8,736.4" fill="#aba8a2"/><polygon points="605.2,887.7 545.3,853.1 545.3,783.9 605.2,749.3 665.2,783.9 665.2,853.1" fill="#aba8a2"/><polygon points="740.0,887.7 680.1,853.1 680.1,783.9 740.0,749.3 799.9,783.9 799.9,853.1" fill="#aba8a2"/><polygon points="874.8,887.7 814.8,853.1 814.8,783.9 874.8,749.3 934.7,783.9 934.7,853.1" fill="#aba8a2"/><polygon points="1009.5,887.7 949.6,853.1 949.6,783.9 1009.5,749.3 1069.4,783.9 1069.4,853.1" fill="#aba8a2"/><polygon points="1144.3,887.7 1084.3,853.1 1084.3,783.9 1144.3,749.3 1204.2,783.9 1204.2,853.1" fill="#aba8a2"/><polygon points="672.6,1004.4 612.7,969.8 612.7,900.6 672.6,866.0 732.6,900.6 732.6,969.8" fill="#aba8a2"/><polygon points="807.4,1004.4 747.5,969.8 747.5,900.6 807.4,866.0 867.3,900.6 867.3,969.8" fill="#aba8a2"/><polygon points="942.2,1004.4 882.2,969.8 882.2,900.6 942.2,866.0 1002.1,900.6 1002.1,969.8" fill="#aba8a2"/><polygon points="1076.9,1004.4 1017.0,969.8 1017.0,900.6 1076.9,866.0 1136.8,900.6 1136.8,969.8" fill="#aba8a2"/><polygon points="605.2,1121.1 545.3,1086.5 545.3,1017.3 605.2,982.7 665.2,1017.3 665.2,1086.5" fill="#aba8a2"/><polygon points="740.0,1121.1 680.1,1086.5 680.1,1017.3 740.0,982.7 799.9,1017.3 799.9,1086.5" fill="#aba8a2"/><polygon points="874.8,1121.1 814.8,1086.5 814.8,1017.3 874.8,982.7 934.7,1017.3 934.7,1086.5" fill="#aba8a2"/><polygon points="1009.5,1121.1 949.6,1086.5 949.6,1017.3 1009.5,982.7 1069.4,1017.3 1069.4,1086.5" fill="#aba8a2"/><polygon points="1144.3,1121.1 1084.3,1086.5 1084.3,1017.3 1144.3,982.7 1204.2,1017.3 1204.2,1086.5" fill="#aba8a2"/></g><g filter="url(#blr)"><polygon points="605.2,639.9 557.8,612.5 557.8,557.7 605.2,530.3 652.7,557.7 652.7,612.5" fill="#84807c"/><polygon points="740.0,639.9 692.5,612.5 692.5,557.7 740.0,530.3 787.5,557.7 787.5,612.5" fill="#84807c"/><polygon points="874.8,639.9 827.3,612.5 827.3,557.7 874.8,530.3 922.2,557.7 922.2,612.5" fill="#84807c"/><polygon points="1009.5,639.9 962.0,612.5 962.0,557.7 1009.5,530.3 1057.0,557.7 1057.0,612.5" fill="#84807c"/><polygon points="1144.3,639.9 1096.8,612.5 1096.8,557.7 1144.3,530.3 1191.7,557.7 1191.7,612.5" fill="#84807c"/><polygon points="672.6,756.6 625.2,729.2 625.2,674.4 672.6,647.0 720.1,674.4 720.1,729.2" fill="#84807c"/><polygon points="807.4,756.6 759.9,729.2 759.9,674.4 807.4,647.0 854.9,674.4 854.9,729.2" fill="#84807c"/><polygon points="942.2,756.6 894.7,729.2 894.7,674.4 942.2,647.0 989.6,674.4 989.6,729.2" fill="#84807c"/><polygon points="1076.9,756.6 1029.4,729.2 1029.4,674.4 1076.9,647.0 1124.4,674.4 1124.4,729.2" fill="#84807c"/><polygon points="605.2,873.3 557.8,845.9 557.8,791.1 605.2,763.7 652.7,791.1 652.7,845.9" fill="#84807c"/><polygon points="740.0,873.3 692.5,845.9 692.5,791.1 740.0,763.7 787.5,791.1 787.5,845.9" fill="#84807c"/><polygon points="874.8,873.3 827.3,845.9 827.3,791.1 874.8,763.7 922.2,791.1 922.2,845.9" fill="#84807c"/><polygon points="1009.5,873.3 962.0,845.9 962.0,791.1 1009.5,763.7 1057.0,791.1 1057.0,845.9" fill="#84807c"/><polygon points="1144.3,873.3 1096.8,845.9 1096.8,791.1 1144.3,763.7 1191.7,791.1 1191.7,845.9" fill="#84807c"/><polygon points="672.6,990.0 625.2,962.6 625.2,907.8 672.6,880.4 720.1,907.8 720.1,962.6" fill="#84807c"/><polygon points="807.4,990.0 759.9,962.6 759.9,907.8 807.4,880.4 854.9,907.8 854.9,962.6" fill="#84807c"/><polygon points="942.2,990.0 894.7,962.6 894.7,907.8 942.2,880.4 989.6,907.8 989.6,962.6" fill="#84807c"/><polygon points="1076.9,990.0 1029.4,962.6 1029.4,907.8 1076.9,880.4 1124.4,907.8 1124.4,962.6" fill="#84807c"/><polygon points="605.2,1106.7 557.8,1079.3 557.8,1024.5 605.2,997.1 652.7,1024.5 652.7,1079.3" fill="#84807c"/><polygon points="740.0,1106.7 692.5,1079.3 692.5,1024.5 740.0,997.1 787.5,1024.5 787.5,1079.3" fill="#84807c"/><polygon points="874.8,1106.7 827.3,1079.3 827.3,1024.5 874.8,997.1 922.2,1024.5 922.2,1079.3" fill="#84807c"/><polygon points="1009.5,1106.7 962.0,1079.3 962.0,1024.5 1009.5,997.1 1057.0,1024.5 1057.0,1079.3" fill="#84807c"/><polygon points="1144.3,1106.7 1096.8,1079.3 1096.8,1024.5 1144.3,997.1 1191.7,1024.5 1191.7,1079.3" fill="#84807c"/></g><circle cx="837.1" cy="740.1" r="1.2" fill="#eceae6"/><circle cx="1026.1" cy="723.1" r="1.1" fill="#6a6664"/><circle cx="795.6" cy="720.7" r="0.9" fill="#dcdad6"/><circle cx="748.5" cy="821.9" r="1.3" fill="#eceae6"/><circle cx="1074.0" cy="883.6" r="1.1" fill="#eceae6"/><circle cx="933.3" cy="813.6" r="1.5" fill="#eceae6"/><circle cx="925.5" cy="734.8" r="0.9" fill="#6a6664"/><circle cx="758.8" cy="787.2" r="1.3" fill="#dcdad6"/><circle cx="753.2" cy="865.8" r="0.7" fill="#eceae6"/><circle cx="922.1" cy="713.8" r="0.6" fill="#dcdad6"/><circle cx="902.6" cy="854.0" r="1.3" fill="#5a5654"/><circle cx="936.5" cy="830.5" r="0.8" fill="#dcdad6"/><circle cx="979.6" cy="768.0" r="1.1" fill="#6a6664"/><circle cx="902.1" cy="797.7" r="0.9" fill="#6a6664"/><circle cx="1086.5" cy="730.3" r="0.9" fill="#f6f4f0"/><circle cx="771.8" cy="841.2" r="0.5" fill="#eceae6"/><circle cx="1004.5" cy="866.3" r="1.4" fill="#f6f4f0"/><circle cx="843.2" cy="799.7" r="1.0" fill="#5a5654"/><circle cx="740.1" cy="723.0" r="0.8" fill="#eceae6"/><circle cx="737.1" cy="904.7" r="1.1" fill="#5a5654"/><circle cx="822.1" cy="810.4" r="1.2" fill="#eceae6"/><circle cx="1071.4" cy="801.3" r="1.1" fill="#5a5654"/><circle cx="736.4" cy="924.7" r="0.6" fill="#dcdad6"/><circle cx="865.2" cy="969.1" r="1.0" fill="#dcdad6"/><circle cx="884.7" cy="859.3" r="1.4" fill="#5a5654"/><circle cx="1042.3" cy="778.2" r="0.9" fill="#f6f4f0"/><circle cx="973.4" cy="808.8" r="0.7" fill="#eceae6"/><circle cx="781.0" cy="764.4" r="0.7" fill="#5a5654"/><circle cx="1029.8" cy="749.5" r="0.8" fill="#dcdad6"/><circle cx="873.2" cy="805.4" r="1.1" fill="#dcdad6"/><circle cx="976.4" cy="849.1" r="1.1" fill="#eceae6"/><circle cx="887.5" cy="955.4" r="1.5" fill="#6a6664"/><circle cx="863.1" cy="814.3" r="0.6" fill="#5a5654"/><circle cx="737.7" cy="715.1" r="0.7" fill="#dcdad6"/><circle cx="755.8" cy="874.6" r="0.6" fill="#6a6664"/><circle cx="771.5" cy="725.3" r="0.9" fill="#eceae6"/><circle cx="740.7" cy="757.2" r="0.9" fill="#f6f4f0"/><circle cx="1077.1" cy="875.1" r="1.0" fill="#eceae6"/><circle cx="1036.6" cy="991.9" r="1.0" fill="#5a5654"/><circle cx="832.5" cy="738.1" r="1.2" fill="#f6f4f0"/><circle cx="895.9" cy="901.9" r="1.0" fill="#dcdad6"/><circle cx="1075.4" cy="852.9" r="0.6" fill="#6a6664"/><circle cx="1061.4" cy="921.7" r="0.8" fill="#eceae6"/><circle cx="978.6" cy="773.1" r="0.9" fill="#dcdad6"/><circle cx="849.2" cy="761.6" r="1.0" fill="#6a6664"/><circle cx="839.3" cy="761.7" r="1.3" fill="#dcdad6"/><circle cx="1020.3" cy="939.7" r="1.2" fill="#dcdad6"/><circle cx="790.0" cy="842.3" r="1.2" fill="#eceae6"/><circle cx="1014.2" cy="836.2" r="0.7" fill="#6a6664"/><circle cx="1077.5" cy="828.7" r="1.4" fill="#f6f4f0"/><circle cx="1076.9" cy="804.0" r="0.7" fill="#dcdad6"/><circle cx="892.6" cy="796.0" r="1.0" fill="#6a6664"/><circle cx="1033.4" cy="838.4" r="1.2" fill="#eceae6"/><circle cx="1031.2" cy="730.9" r="0.9" fill="#dcdad6"/><circle cx="895.7" cy="748.4" r="1.3" fill="#f6f4f0"/><circle cx="747.0" cy="977.9" r="1.2" fill="#5a5654"/><circle cx="866.5" cy="978.1" r="1.2" fill="#dcdad6"/><circle cx="1091.4" cy="703.2" r="1.1" fill="#5a5654"/><circle cx="1020.5" cy="738.7" r="1.3" fill="#5a5654"/><circle cx="963.8" cy="799.8" r="1.0" fill="#dcdad6"/><circle cx="722.1" cy="934.0" r="1.2" fill="#eceae6"/><circle cx="914.1" cy="974.2" r="0.9" fill="#dcdad6"/><circle cx="1027.9" cy="758.1" r="0.8" fill="#f6f4f0"/><circle cx="904.4" cy="923.3" r="0.8" fill="#6a6664"/><circle cx="873.2" cy="734.2" r="1.4" fill="#f6f4f0"/><circle cx="1055.1" cy="893.1" r="1.3" fill="#6a6664"/><circle cx="873.8" cy="969.4" r="1.0" fill="#6a6664"/><circle cx="771.7" cy="847.7" r="1.4" fill="#dcdad6"/><circle cx="945.3" cy="927.0" r="0.6" fill="#dcdad6"/><circle cx="893.9" cy="911.8" r="1.1" fill="#f6f4f0"/><circle cx="973.3" cy="853.7" r="1.0" fill="#eceae6"/><circle cx="1049.6" cy="712.0" r="0.7" fill="#eceae6"/><circle cx="1007.5" cy="846.8" r="1.1" fill="#eceae6"/><circle cx="882.4" cy="878.1" r="1.0" fill="#6a6664"/><circle cx="789.8" cy="777.9" r="1.0" fill="#5a5654"/><circle cx="906.9" cy="769.0" r="1.0" fill="#f6f4f0"/><circle cx="1064.7" cy="961.9" r="0.7" fill="#5a5654"/><circle cx="766.1" cy="731.4" r="0.9" fill="#eceae6"/><circle cx="969.0" cy="823.1" r="0.7" fill="#f6f4f0"/><circle cx="1011.9" cy="963.2" r="0.7" fill="#f6f4f0"/><circle cx="768.3" cy="959.0" r="1.5" fill="#dcdad6"/><circle cx="997.7" cy="723.1" r="1.4" fill="#dcdad6"/><circle cx="1090.2" cy="943.9" r="0.7" fill="#5a5654"/><circle cx="1091.7" cy="815.7" r="0.9" fill="#f6f4f0"/><circle cx="835.0" cy="910.9" r="0.5" fill="#6a6664"/><circle cx="888.3" cy="905.2" r="0.9" fill="#6a6664"/><circle cx="951.1" cy="848.2" r="0.6" fill="#dcdad6"/><circle cx="1083.2" cy="726.3" r="0.8" fill="#eceae6"/><circle cx="1058.2" cy="749.3" r="1.3" fill="#5a5654"/><circle cx="1036.8" cy="897.1" r="1.4" fill="#5a5654"/><circle cx="770.8" cy="969.8" r="1.1" fill="#f6f4f0"/><circle cx="748.0" cy="712.2" r="1.2" fill="#5a5654"/><circle cx="1054.2" cy="775.4" r="0.5" fill="#eceae6"/><circle cx="1018.6" cy="720.0" r="1.4" fill="#eceae6"/><circle cx="814.5" cy="731.4" r="0.5" fill="#6a6664"/><circle cx="872.7" cy="968.7" r="1.1" fill="#eceae6"/><circle cx="914.2" cy="766.3" r="0.6" fill="#dcdad6"/><circle cx="813.5" cy="749.2" r="1.4" fill="#f6f4f0"/><circle cx="915.8" cy="756.6" r="0.9" fill="#dcdad6"/><circle cx="816.8" cy="935.3" r="1.5" fill="#eceae6"/><circle cx="719.8" cy="914.2" r="1.1" fill="#dcdad6"/><circle cx="909.4" cy="768.5" r="0.9" fill="#5a5654"/><circle cx="963.5" cy="858.2" r="1.4" fill="#6a6664"/><circle cx="831.0" cy="759.3" r="0.7" fill="#dcdad6"/><circle cx="1030.3" cy="906.3" r="1.1" fill="#5a5654"/><circle cx="1090.0" cy="988.6" r="1.3" fill="#eceae6"/><circle cx="740.9" cy="916.5" r="0.8" fill="#dcdad6"/><circle cx="735.1" cy="893.9" r="0.9" fill="#6a6664"/><circle cx="968.8" cy="779.3" r="0.7" fill="#f6f4f0"/><circle cx="731.2" cy="750.4" r="0.8" fill="#eceae6"/><circle cx="814.0" cy="982.6" r="1.5" fill="#6a6664"/><circle cx="836.9" cy="705.3" r="1.4" fill="#dcdad6"/><circle cx="849.5" cy="695.3" r="0.9" fill="#5a5654"/><circle cx="820.0" cy="891.1" r="0.7" fill="#eceae6"/><circle cx="748.5" cy="939.3" r="0.6" fill="#6a6664"/><circle cx="729.8" cy="701.7" r="0.8" fill="#dcdad6"/><circle cx="746.1" cy="981.3" r="1.4" fill="#dcdad6"/><circle cx="963.9" cy="909.1" r="1.4" fill="#5a5654"/><circle cx="1004.4" cy="910.5" r="1.0" fill="#f6f4f0"/><circle cx="989.2" cy="887.3" r="0.5" fill="#6a6664"/><circle cx="952.4" cy="914.4" r="1.3" fill="#dcdad6"/><circle cx="1059.8" cy="920.1" r="1.1" fill="#eceae6"/><circle cx="1028.0" cy="869.6" r="1.4" fill="#dcdad6"/><circle cx="746.3" cy="707.5" r="1.1" fill="#eceae6"/><circle cx="857.1" cy="830.0" r="0.6" fill="#eceae6"/><circle cx="952.0" cy="898.5" r="1.0" fill="#eceae6"/><circle cx="887.6" cy="716.0" r="1.4" fill="#6a6664"/><circle cx="748.9" cy="852.3" r="1.2" fill="#5a5654"/><circle cx="809.8" cy="717.3" r="0.8" fill="#dcdad6"/><circle cx="801.7" cy="889.3" r="1.0" fill="#5a5654"/><circle cx="743.2" cy="967.2" r="0.8" fill="#eceae6"/><circle cx="948.5" cy="887.2" r="0.6" fill="#dcdad6"/><circle cx="840.1" cy="889.8" r="1.2" fill="#6a6664"/><circle cx="929.7" cy="698.7" r="0.6" fill="#f6f4f0"/><circle cx="1083.6" cy="724.8" r="0.7" fill="#5a5654"/><circle cx="824.5" cy="849.4" r="1.0" fill="#5a5654"/><circle cx="1005.5" cy="992.0" r="1.0" fill="#f6f4f0"/><circle cx="1085.7" cy="974.9" r="0.5" fill="#5a5654"/><circle cx="743.1" cy="846.5" r="1.5" fill="#f6f4f0"/><circle cx="861.0" cy="969.0" r="1.4" fill="#eceae6"/><circle cx="935.0" cy="737.4" r="1.0" fill="#f6f4f0"/><circle cx="764.4" cy="940.2" r="1.0" fill="#eceae6"/><circle cx="981.3" cy="764.2" r="1.4" fill="#5a5654"/><circle cx="863.8" cy="742.6" r="1.4" fill="#5a5654"/><circle cx="868.1" cy="912.4" r="0.9" fill="#5a5654"/><circle cx="834.1" cy="946.2" r="0.5" fill="#f6f4f0"/><circle cx="1032.9" cy="730.9" r="1.4" fill="#eceae6"/><circle cx="1056.6" cy="781.7" r="0.9" fill="#5a5654"/><circle cx="862.3" cy="955.1" r="0.6" fill="#5a5654"/><circle cx="1001.1" cy="950.4" r="0.8" fill="#eceae6"/><circle cx="1031.2" cy="780.4" r="1.4" fill="#dcdad6"/><circle cx="1083.0" cy="825.4" r="0.8" fill="#f6f4f0"/><circle cx="1012.4" cy="822.9" r="0.5" fill="#5a5654"/><circle cx="1061.1" cy="976.3" r="1.0" fill="#eceae6"/><circle cx="732.8" cy="914.0" r="1.0" fill="#dcdad6"/><circle cx="958.9" cy="780.6" r="0.5" fill="#6a6664"/><circle cx="762.4" cy="836.2" r="0.8" fill="#f6f4f0"/><circle cx="811.2" cy="915.9" r="1.2" fill="#5a5654"/><circle cx="963.3" cy="785.0" r="1.1" fill="#5a5654"/><circle cx="759.5" cy="887.3" r="0.6" fill="#6a6664"/><circle cx="1058.3" cy="843.6" r="0.7" fill="#f6f4f0"/><circle cx="1092.7" cy="829.5" r="0.6" fill="#dcdad6"/><circle cx="806.8" cy="747.2" r="1.1" fill="#f6f4f0"/><circle cx="804.9" cy="772.2" r="1.1" fill="#eceae6"/><circle cx="998.9" cy="818.4" r="0.9" fill="#6a6664"/><circle cx="793.8" cy="775.8" r="1.3" fill="#5a5654"/><circle cx="819.5" cy="984.3" r="0.6" fill="#6a6664"/><circle cx="915.1" cy="931.3" r="1.3" fill="#eceae6"/><circle cx="817.0" cy="769.3" r="0.9" fill="#5a5654"/><circle cx="878.1" cy="788.3" r="1.3" fill="#eceae6"/><circle cx="762.4" cy="822.1" r="1.3" fill="#5a5654"/><circle cx="1081.9" cy="841.5" r="0.6" fill="#6a6664"/><circle cx="1039.1" cy="985.7" r="0.7" fill="#eceae6"/><circle cx="799.0" cy="740.5" r="1.5" fill="#eceae6"/><circle cx="1071.8" cy="910.8" r="1.1" fill="#5a5654"/><circle cx="746.3" cy="927.3" r="0.5" fill="#dcdad6"/><circle cx="802.4" cy="970.1" r="1.1" fill="#f6f4f0"/><circle cx="1079.7" cy="882.3" r="1.0" fill="#5a5654"/><circle cx="979.5" cy="728.5" r="0.6" fill="#6a6664"/><circle cx="1072.5" cy="752.3" r="0.8" fill="#6a6664"/><circle cx="714.4" cy="855.7" r="1.5" fill="#f6f4f0"/><circle cx="1078.4" cy="887.7" r="1.4" fill="#5a5654"/><circle cx="914.0" cy="858.6" r="0.5" fill="#5a5654"/><circle cx="981.8" cy="786.9" r="0.5" fill="#5a5654"/><circle cx="1050.2" cy="888.5" r="0.6" fill="#dcdad6"/><circle cx="967.6" cy="971.6" r="0.7" fill="#eceae6"/><circle cx="978.4" cy="909.8" r="0.9" fill="#5a5654"/><circle cx="789.3" cy="933.3" r="1.2" fill="#6a6664"/><circle cx="739.6" cy="843.2" r="0.7" fill="#dcdad6"/><circle cx="801.7" cy="761.2" r="1.3" fill="#f6f4f0"/><circle cx="755.4" cy="881.5" r="1.1" fill="#dcdad6"/><circle cx="898.3" cy="967.2" r="0.6" fill="#6a6664"/><circle cx="769.6" cy="812.6" r="0.7" fill="#6a6664"/><circle cx="767.9" cy="710.5" r="0.6" fill="#5a5654"/><circle cx="884.9" cy="907.9" r="0.8" fill="#eceae6"/><circle cx="1093.1" cy="973.5" r="0.8" fill="#dcdad6"/><circle cx="961.9" cy="851.9" r="1.0" fill="#f6f4f0"/><circle cx="966.5" cy="808.2" r="0.9" fill="#f6f4f0"/><circle cx="882.1" cy="727.6" r="0.6" fill="#eceae6"/><circle cx="847.6" cy="980.7" r="0.6" fill="#dcdad6"/><circle cx="858.4" cy="924.9" r="0.8" fill="#5a5654"/><circle cx="747.3" cy="905.9" r="0.7" fill="#6a6664"/><circle cx="1063.4" cy="752.7" r="0.9" fill="#5a5654"/><circle cx="725.5" cy="817.8" r="1.3" fill="#5a5654"/><circle cx="729.4" cy="705.4" r="0.6" fill="#eceae6"/><circle cx="811.7" cy="918.4" r="1.4" fill="#f6f4f0"/><circle cx="851.9" cy="795.2" r="1.5" fill="#eceae6"/><circle cx="813.6" cy="909.3" r="0.8" fill="#f6f4f0"/><circle cx="827.0" cy="910.8" r="1.1" fill="#eceae6"/><circle cx="723.2" cy="764.9" r="1.0" fill="#5a5654"/><circle cx="1076.5" cy="810.6" r="0.8" fill="#5a5654"/><circle cx="1023.6" cy="734.7" r="1.0" fill="#eceae6"/><circle cx="1019.0" cy="915.8" r="1.3" fill="#dcdad6"/><circle cx="944.8" cy="793.0" r="0.8" fill="#f6f4f0"/><circle cx="1011.9" cy="873.1" r="1.0" fill="#5a5654"/><circle cx="1000.1" cy="768.9" r="0.6" fill="#eceae6"/><circle cx="897.0" cy="857.8" r="0.7" fill="#5a5654"/><circle cx="1049.7" cy="990.4" r="0.8" fill="#eceae6"/><circle cx="793.2" cy="820.9" r="1.5" fill="#5a5654"/><circle cx="779.8" cy="734.7" r="1.0" fill="#dcdad6"/><circle cx="998.2" cy="948.2" r="1.2" fill="#eceae6"/><circle cx="1010.3" cy="782.9" r="0.8" fill="#f6f4f0"/><circle cx="855.7" cy="915.7" r="0.7" fill="#dcdad6"/><circle cx="784.6" cy="765.4" r="0.8" fill="#6a6664"/><circle cx="785.5" cy="714.4" r="0.8" fill="#dcdad6"/><circle cx="906.8" cy="764.2" r="1.3" fill="#5a5654"/><circle cx="1090.6" cy="725.6" r="1.0" fill="#dcdad6"/><circle cx="1033.4" cy="968.4" r="0.5" fill="#f6f4f0"/><circle cx="802.5" cy="710.1" r="1.1" fill="#6a6664"/><circle cx="787.8" cy="717.5" r="1.0" fill="#dcdad6"/><circle cx="884.7" cy="772.7" r="1.3" fill="#eceae6"/><circle cx="754.2" cy="873.2" r="1.1" fill="#dcdad6"/><circle cx="728.2" cy="796.7" r="0.5" fill="#f6f4f0"/><circle cx="728.5" cy="913.9" r="1.4" fill="#eceae6"/><circle cx="1025.2" cy="817.3" r="0.9" fill="#6a6664"/><circle cx="832.6" cy="755.8" r="1.3" fill="#6a6664"/><circle cx="897.7" cy="817.0" r="1.3" fill="#6a6664"/><circle cx="772.7" cy="854.7" r="1.2" fill="#5a5654"/><circle cx="978.3" cy="817.5" r="0.8" fill="#f6f4f0"/><circle cx="872.8" cy="710.4" r="1.2" fill="#f6f4f0"/><circle cx="871.4" cy="700.4" r="1.3" fill="#f6f4f0"/><circle cx="958.9" cy="811.8" r="0.9" fill="#eceae6"/><circle cx="879.0" cy="741.8" r="0.6" fill="#eceae6"/><circle cx="868.4" cy="959.0" r="1.0" fill="#dcdad6"/><circle cx="763.4" cy="710.5" r="0.6" fill="#5a5654"/><circle cx="747.8" cy="881.0" r="0.9" fill="#6a6664"/><circle cx="779.2" cy="799.0" r="0.7" fill="#dcdad6"/><circle cx="1065.7" cy="727.5" r="1.0" fill="#dcdad6"/><circle cx="828.6" cy="945.4" r="0.5" fill="#5a5654"/><circle cx="833.5" cy="876.7" r="1.1" fill="#eceae6"/><circle cx="1057.6" cy="880.5" r="1.3" fill="#dcdad6"/><circle cx="957.3" cy="951.1" r="1.1" fill="#6a6664"/><circle cx="1035.6" cy="942.9" r="0.7" fill="#dcdad6"/><circle cx="729.9" cy="975.6" r="0.7" fill="#f6f4f0"/><circle cx="760.8" cy="768.9" r="1.2" fill="#dcdad6"/><circle cx="729.6" cy="863.1" r="1.3" fill="#eceae6"/><circle cx="967.8" cy="791.9" r="0.9" fill="#5a5654"/><circle cx="923.0" cy="882.5" r="0.8" fill="#5a5654"/><circle cx="831.1" cy="769.5" r="0.9" fill="#f6f4f0"/><circle cx="883.8" cy="826.1" r="0.5" fill="#6a6664"/><circle cx="1088.7" cy="834.1" r="0.9" fill="#6a6664"/><circle cx="1010.4" cy="832.0" r="0.7" fill="#5a5654"/><circle cx="866.1" cy="715.1" r="0.9" fill="#f6f4f0"/><circle cx="748.9" cy="827.1" r="1.0" fill="#eceae6"/><circle cx="729.4" cy="734.0" r="1.4" fill="#f6f4f0"/><circle cx="1009.5" cy="847.9" r="0.6" fill="#6a6664"/><circle cx="1054.0" cy="890.2" r="1.3" fill="#eceae6"/><circle cx="1039.7" cy="992.8" r="1.2" fill="#eceae6"/><circle cx="787.6" cy="988.5" r="1.0" fill="#dcdad6"/><circle cx="974.7" cy="910.6" r="0.7" fill="#f6f4f0"/><circle cx="946.0" cy="770.4" r="0.8" fill="#6a6664"/><circle cx="818.5" cy="938.9" r="0.6" fill="#6a6664"/><circle cx="1080.4" cy="838.6" r="1.1" fill="#6a6664"/><circle cx="906.3" cy="790.4" r="0.5" fill="#dcdad6"/><circle cx="867.3" cy="885.3" r="0.8" fill="#f6f4f0"/><circle cx="1054.3" cy="745.5" r="1.3" fill="#eceae6"/><circle cx="1005.9" cy="709.5" r="1.4" fill="#5a5654"/><circle cx="925.0" cy="868.4" r="1.4" fill="#eceae6"/><circle cx="809.8" cy="855.2" r="1.4" fill="#f6f4f0"/><circle cx="814.6" cy="991.2" r="1.1" fill="#f6f4f0"/><circle cx="839.7" cy="719.3" r="0.7" fill="#6a6664"/><circle cx="996.6" cy="709.4" r="1.3" fill="#f6f4f0"/><circle cx="831.8" cy="983.8" r="1.4" fill="#f6f4f0"/><circle cx="992.6" cy="918.4" r="0.7" fill="#f6f4f0"/><circle cx="948.1" cy="824.2" r="1.0" fill="#eceae6"/><circle cx="764.2" cy="763.0" r="1.2" fill="#eceae6"/><circle cx="734.7" cy="864.6" r="0.8" fill="#6a6664"/><circle cx="849.7" cy="762.1" r="1.1" fill="#6a6664"/><circle cx="764.8" cy="804.5" r="1.3" fill="#dcdad6"/><circle cx="765.2" cy="975.0" r="0.7" fill="#dcdad6"/><circle cx="885.3" cy="714.0" r="0.6" fill="#f6f4f0"/><circle cx="866.7" cy="774.0" r="0.5" fill="#6a6664"/><circle cx="1053.2" cy="872.8" r="1.1" fill="#6a6664"/><circle cx="1070.1" cy="914.3" r="0.7" fill="#eceae6"/><circle cx="730.7" cy="853.9" r="0.9" fill="#dcdad6"/><circle cx="774.5" cy="967.6" r="0.6" fill="#6a6664"/><circle cx="923.4" cy="976.3" r="0.6" fill="#dcdad6"/><circle cx="910.9" cy="887.2" r="1.1" fill="#5a5654"/><circle cx="1023.1" cy="747.2" r="0.8" fill="#f6f4f0"/><circle cx="951.9" cy="992.2" r="1.2" fill="#5a5654"/><rect x="714" y="695" width="380" height="299" filter="url(#grn)" opacity="0.35"/></svg>
<div class="a" style="left:1094px;top:618px;width:1.5px;height:436px;background:#151515"></div>



<!-- ============ RIGHT PANEL ============ -->
<div class="a" style="left:1095px;top:0;width:1.5px;height:1054px;background:#0c0c0c"></div>
<div class="a" style="left:1096.5px;top:0;width:562.5px;height:1054px;background:#333;border-left:3.5px solid #2e2e2e"></div>
<div class="t" style="left:1123.7px;top:3.8px;font-size:14px;color:#d4d4d4;letter-spacing:0.4px;">Width</div>
<div class="a" style="left:1184px;top:9.0px;width:132.0px;height:3px;background:#c8c8c8;border-radius:1px"></div><div class="a" style="left:1339.5px;top:9.0px;width:133.5px;height:3px;background:#474747;border-radius:1px"></div><div class="a" style="left:1318.5px;top:1.5px;width:18px;height:18px;border-radius:50%;border:3.7px solid #c8c8c8;background:#2b2b2b"></div>
<div class="t" style="left:1570.5px;top:4.1px;font-size:14px;color:#d4d4d4;letter-spacing:0px;">0</div>
<div class="t" style="left:1609.5px;top:4.1px;font-size:14px;color:#d4d4d4;letter-spacing:0.6px;">Parent</div>
<div class="t" style="left:1123.7px;top:33.6px;font-size:14px;color:#d4d4d4;letter-spacing:0.7px;">Height</div>
<div class="a" style="left:1184px;top:38.9px;width:132.0px;height:3px;background:#c8c8c8;border-radius:1px"></div><div class="a" style="left:1339.5px;top:38.9px;width:133.5px;height:3px;background:#474747;border-radius:1px"></div><div class="a" style="left:1318.5px;top:31.4px;width:18px;height:18px;border-radius:50%;border:3.7px solid #c8c8c8;background:#2b2b2b"></div>
<div class="t" style="left:1570.5px;top:34.1px;font-size:14px;color:#d4d4d4;letter-spacing:0px;">0</div>
<div class="t" style="left:1609.5px;top:34.1px;font-size:14px;color:#d4d4d4;letter-spacing:0.6px;">Parent</div>
<div class="a" style="left:1097px;top:64.5px;width:562px;height:1.5px;background:#2a2a2a"></div>
<div class="t" style="left:1120.6px;top:79.8px;font-size:14px;color:#dadada;font-weight:bold;letter-spacing:0.58px;">Output Format</div>
<div class="a" style="left:1123px;top:108px;width:536px;height:27px;background:#3b3b3b;border-radius:2px"></div>
<div class="t" style="left:1131.5px;top:114.7px;font-size:14px;color:#7e7e7e;letter-spacing:0.88px;">8 Bits per Channel</div>
<div class="a" style="left:1097px;top:148.5px;width:562px;height:1.5px;background:#2a2a2a"></div>
<div class="t" style="left:1120.6px;top:162.9px;font-size:14px;color:#dadada;font-weight:bold;letter-spacing:0.4px;">Pixel Size</div>
<div class="t" style="left:1123.7px;top:195.8px;font-size:14px;color:#d4d4d4;letter-spacing:0.4px;">Width</div>
<div class="a" style="left:1184px;top:200.8px;width:428.8px;height:3px;background:#c8c8c8;border-radius:1px"></div><div class="a" style="left:1615.3px;top:193.3px;width:18px;height:18px;border-radius:50%;border:3.7px solid #c8c8c8;background:#2b2b2b"></div>
<div class="t" style="left:1123.7px;top:226.1px;font-size:14px;color:#d4d4d4;letter-spacing:0.7px;">Height</div>
<div class="a" style="left:1184px;top:231.1px;width:428.8px;height:3px;background:#c8c8c8;border-radius:1px"></div><div class="a" style="left:1615.3px;top:223.6px;width:18px;height:18px;border-radius:50%;border:3.7px solid #c8c8c8;background:#2b2b2b"></div>
<div class="a" style="left:1097px;top:258.0px;width:562px;height:1.5px;background:#2a2a2a"></div>
<div class="t" style="left:1120.6px;top:272.1px;font-size:14px;color:#dadada;font-weight:bold;letter-spacing:0.45px;">Pixel Ratio</div>
<div class="a" style="left:1123px;top:300px;width:536px;height:26.5px;background:#3b3b3b;border-radius:2px"></div>
<div class="t" style="left:1131.5px;top:306.6px;font-size:14px;color:#7e7e7e;letter-spacing:0.3px;">Square</div>
<div class="a" style="left:1097px;top:340.5px;width:562px;height:1.5px;background:#2a2a2a"></div>
<div class="t" style="left:1120.6px;top:355.1px;font-size:14px;color:#dadada;font-weight:bold;letter-spacing:0.55px;">Tiling Mode</div>
<div class="a" style="left:1123px;top:383px;width:536px;height:26.5px;background:#3b3b3b;border-radius:2px"></div>
<div class="t" style="left:1131.5px;top:389.6px;font-size:14px;color:#7e7e7e;letter-spacing:0.83px;">H and V Tiling</div>
<div class="a" style="left:1097px;top:421.3px;width:562px;height:1.5px;background:#2a2a2a"></div>
<div class="t" style="left:1120.6px;top:436.9px;font-size:14px;color:#dadada;font-weight:bold;letter-spacing:0.72px;">Random Seed</div>
<svg style="left:1630px;top:428px" width="30" height="32" viewBox="1630 428 30 32"><path d="M1635 437H1641L1643 440.5M1635 450.3H1640L1650.6 436H1654M1646.8 447.3L1650.6 450.3H1654" fill="none" stroke="#dcdcdc" stroke-width="3"/><path d="M1653.2 432.1L1658.8 437L1653.2 442ZM1653.2 445.3L1658.8 450.3L1653.2 455.7Z" fill="#dcdcdc"/></svg>
<div class="a" style="left:1144.3px;top:475.5px;width:480.7px;height:3px;background:#474747;border-radius:1px"></div><div class="a" style="left:1123.3px;top:468.0px;width:18px;height:18px;border-radius:50%;border:3.7px solid #c8c8c8;background:#2b2b2b"></div>
<div class="a" style="left:1097px;top:503px;width:562px;height:35px;background:#4a4a4a"></div>
<svg style="left:1109px;top:515px" width="16" height="12" viewBox="0 0 16 12"><path d="M1.5 2L8 9L14.5 2" fill="none" stroke="#d8d8d8" stroke-width="1.8"/></svg>
<div class="t" style="left:1141.5px;top:513.6px;font-size:16.5px;color:#e8e8e8;letter-spacing:0.8px;">ATTRIBUTES</div>
<div class="t" style="left:1120.6px;top:553.8px;font-size:14px;color:#dadada;font-weight:bold;letter-spacing:0.63px;">Package</div>
<div class="a" style="left:1124px;top:582.5px;width:540px;height:26px;background:#232323;border:1px solid #474747;border-radius:3px"></div>
<div class="t" style="left:1129px;top:588.8px;font-size:14.5px;color:#dcdcdc;letter-spacing:0.75px;">:/adobe/Adobe Substance 3D Designer/resources/packages/materials/pbr/tiles_025</div>
<div class="a" style="left:1097px;top:621.1px;width:562px;height:1.5px;background:#2a2a2a"></div>
<div class="t" style="left:1120.6px;top:634.0px;font-size:14px;color:#dadada;font-weight:bold;letter-spacing:0.63px;">Graph instance</div>
<div class="a" style="left:1124px;top:659.5px;width:540px;height:26px;background:#232323;border:1px solid #474747;border-radius:3px"></div>
<div class="t" style="left:1134px;top:665.9px;font-size:14.5px;color:#dcdcdc;letter-spacing:0.66px;">pkg:///tiles_025?dependency=1444847749</div>
<div class="a" style="left:1097px;top:697.9px;width:562px;height:1.5px;background:#2a2a2a"></div>
<div class="t" style="left:1120.6px;top:710.3px;font-size:14px;color:#dadada;font-weight:bold;letter-spacing:0.6px;">Description</div>
<div class="a" style="left:1124px;top:735.5px;width:540px;height:101px;background:#232323;border:1px solid #474747;border-radius:3px"></div>
<div class="t" style="left:1137.7px;top:742.4px;font-size:14.5px;color:#dcdcdc;letter-spacing:0.6px;">Concrete hexagon tiles.</div>
<div class="a" style="left:1097px;top:849.0px;width:562px;height:1.5px;background:#2a2a2a"></div>
<div class="t" style="left:1120.6px;top:862.3px;font-size:14px;color:#dadada;font-weight:bold;letter-spacing:0.82px;">Category</div>
<div class="a" style="left:1124px;top:887.5px;width:540px;height:25px;background:#232323;border:1px solid #474747;border-radius:3px"></div>
<div class="t" style="left:1134px;top:892.3px;font-size:14.5px;color:#dcdcdc;letter-spacing:0.43px;">PBR Materials/Tiles</div>
<div class="a" style="left:1097px;top:925.2px;width:562px;height:1.5px;background:#2a2a2a"></div>
<div class="t" style="left:1120.6px;top:938.1px;font-size:14px;color:#dadada;font-weight:bold;letter-spacing:0.43px;">Physical Size</div>
<div class="t" style="left:1121px;top:968.1px;font-size:14px;color:#5e5e5e;letter-spacing:0px;">x</div>
<div class="a" style="left:1144.6px;top:973.8px;width:468.2px;height:3px;background:#4a4a4a;border-radius:1px"></div><div class="a" style="left:1615.3px;top:966.3px;width:18px;height:18px;border-radius:50%;border:3.7px solid #6a6a6a;background:#2b2b2b"></div>
<div class="t" style="left:1121px;top:998.1px;font-size:14px;color:#5e5e5e;letter-spacing:0px;">y</div>
<div class="a" style="left:1144.6px;top:1003.7px;width:468.2px;height:3px;background:#4a4a4a;border-radius:1px"></div><div class="a" style="left:1615.3px;top:996.2px;width:18px;height:18px;border-radius:50%;border:3.7px solid #6a6a6a;background:#2b2b2b"></div>
<div class="t" style="left:1120px;top:1028.1px;font-size:14px;color:#5e5e5e;letter-spacing:0px;">z</div>
<div class="a" style="left:1162.8px;top:1033.6px;width:460.7px;height:3px;background:#4a4a4a;border-radius:1px"></div><div class="a" style="left:1145.8px;top:1026.1px;width:18px;height:18px;border-radius:50%;border:3.7px solid #6a6a6a;background:#2b2b2b"></div>
</body></html>
